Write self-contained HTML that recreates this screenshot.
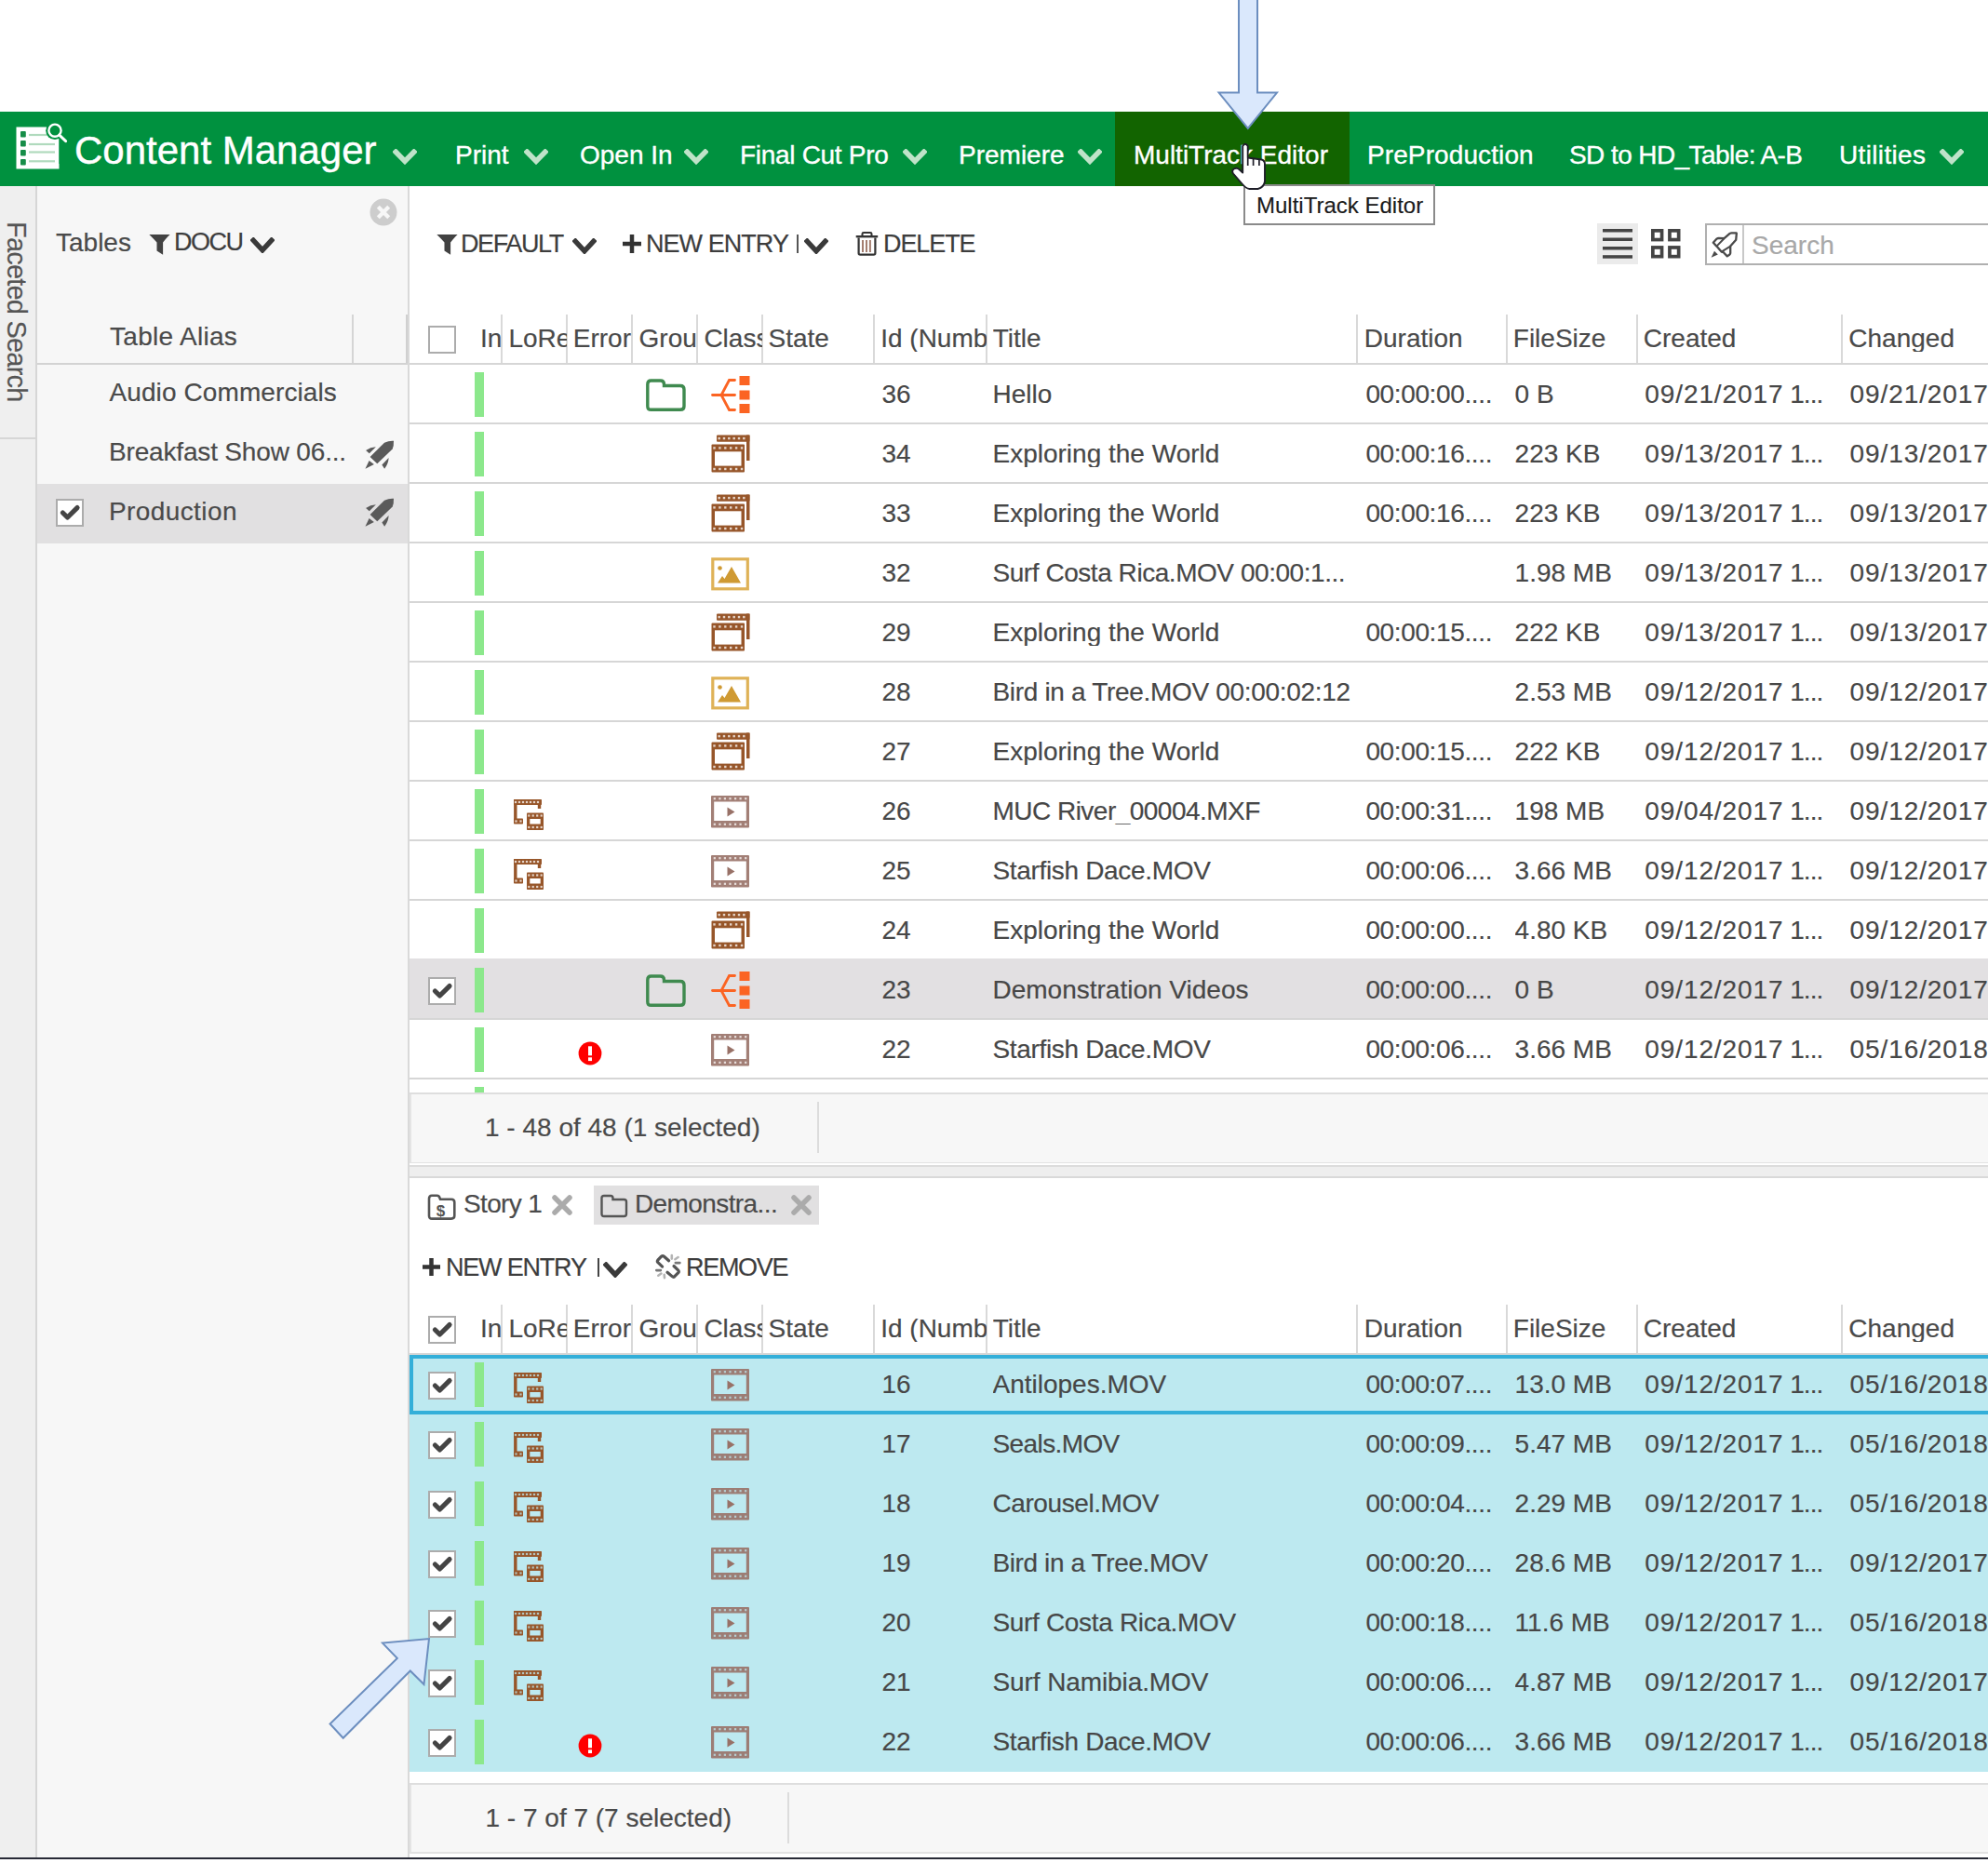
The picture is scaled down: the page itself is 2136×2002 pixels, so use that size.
<!DOCTYPE html><html><head><meta charset="utf-8"><title>Content Manager</title><style>
html,body{margin:0;padding:0;background:#fff;}
body{width:2136px;height:2002px;position:relative;overflow:hidden;font-family:"Liberation Sans",sans-serif;color:#333;}
.t{position:absolute;white-space:nowrap;-webkit-text-stroke:0.18px currentColor;}
.r{position:absolute;display:block;}
</style></head><body>
<div class="r" style="left:0px;top:120px;width:2136px;height:80px;background:#00913f;"></div>
<div class="r" style="left:1198px;top:120px;width:252px;height:80px;background:#126400;"></div>
<svg class="r" style="left:17px;top:132px;" width="57" height="50" viewBox="0 0 57 50">
<rect x="0.5" y="4.5" width="46" height="45" fill="#fff"/>
<g stroke="#b0dabd" stroke-width="2.2"><line x1="14" y1="13" x2="43" y2="13"/><line x1="14" y1="23" x2="42" y2="23"/><line x1="14" y1="31.5" x2="42" y2="31.5"/><line x1="14" y1="41.3" x2="42" y2="41.3"/></g>
<g fill="#168d48"><rect x="5" y="9" width="5.8" height="6.5" rx="1"/><rect x="5" y="19" width="5.8" height="6.5" rx="1"/><rect x="5" y="29" width="5.8" height="6.5" rx="1"/><rect x="5" y="39" width="5.8" height="6.5" rx="1"/></g>
<circle cx="42" cy="8.2" r="9.8" fill="#00913f"/>
<rect x="46.5" y="4" width="12" height="40" fill="#00913f"/>
<circle cx="42" cy="8.2" r="6.6" fill="none" stroke="#fff" stroke-width="2.4"/>
<line x1="46.8" y1="13.2" x2="53.6" y2="19.6" stroke="#fff" stroke-width="3" stroke-linecap="round"/>
</svg>
<div class="t" style="left:80.0px;top:141.4px;font-size:42px;line-height:42px;color:#fff;-webkit-text-stroke:0.4px #fff;">Content Manager</div>
<svg class="r" style="left:422px;top:160px;" width="26" height="16.5" viewBox="0 0 26 16.5"><polyline points="3.3,3.3 13.0,13.2 22.7,3.3" fill="none" stroke="#bfe3c9" stroke-width="5.6" stroke-linecap="square"/></svg>
<div class="t" style="left:489.0px;top:152.9px;font-size:28px;line-height:28px;color:#fff;-webkit-text-stroke:0.35px #fff;">Print</div>
<svg class="r" style="left:563px;top:160px;" width="26" height="16.5" viewBox="0 0 26 16.5"><polyline points="3.3,3.3 13.0,13.2 22.7,3.3" fill="none" stroke="#bfe3c9" stroke-width="5.6" stroke-linecap="square"/></svg>
<div class="t" style="left:623.0px;top:152.9px;font-size:28px;line-height:28px;color:#fff;-webkit-text-stroke:0.35px #fff;">Open In</div>
<svg class="r" style="left:735px;top:160px;" width="26" height="16.5" viewBox="0 0 26 16.5"><polyline points="3.3,3.3 13.0,13.2 22.7,3.3" fill="none" stroke="#bfe3c9" stroke-width="5.6" stroke-linecap="square"/></svg>
<div class="t" style="left:795.0px;top:152.9px;font-size:28px;line-height:28px;color:#fff;letter-spacing:-0.3px;-webkit-text-stroke:0.35px #fff;">Final Cut Pro</div>
<svg class="r" style="left:970px;top:160px;" width="26" height="16.5" viewBox="0 0 26 16.5"><polyline points="3.3,3.3 13.0,13.2 22.7,3.3" fill="none" stroke="#bfe3c9" stroke-width="5.6" stroke-linecap="square"/></svg>
<div class="t" style="left:1030.0px;top:152.9px;font-size:28px;line-height:28px;color:#fff;-webkit-text-stroke:0.35px #fff;">Premiere</div>
<svg class="r" style="left:1158px;top:160px;" width="26" height="16.5" viewBox="0 0 26 16.5"><polyline points="3.3,3.3 13.0,13.2 22.7,3.3" fill="none" stroke="#bfe3c9" stroke-width="5.6" stroke-linecap="square"/></svg>
<div class="t" style="left:1218.0px;top:152.9px;font-size:28px;line-height:28px;color:#fff;-webkit-text-stroke:0.35px #fff;">MultiTrack Editor</div>
<div class="t" style="left:1469.0px;top:152.9px;font-size:28px;line-height:28px;color:#fff;letter-spacing:0.1px;-webkit-text-stroke:0.35px #fff;">PreProduction</div>
<div class="t" style="left:1686.0px;top:152.9px;font-size:28px;line-height:28px;color:#fff;letter-spacing:-0.58px;-webkit-text-stroke:0.35px #fff;">SD to HD_Table: A-B</div>
<div class="t" style="left:1976.0px;top:152.9px;font-size:28px;line-height:28px;color:#fff;letter-spacing:0.35px;-webkit-text-stroke:0.35px #fff;">Utilities</div>
<svg class="r" style="left:2084px;top:160px;" width="26" height="16.5" viewBox="0 0 26 16.5"><polyline points="3.3,3.3 13.0,13.2 22.7,3.3" fill="none" stroke="#bfe3c9" stroke-width="5.6" stroke-linecap="square"/></svg>
<div class="r" style="left:0px;top:200px;width:38px;height:1796px;background:#efefef;"></div>
<div class="r" style="left:38px;top:200px;width:2px;height:1796px;background:#d6d6d6;"></div>
<div class="r" style="left:0px;top:470px;width:38px;height:2px;background:#d6d6d6;"></div>
<div class="t" style="left:3px;top:237.5px;font-size:29px;line-height:29px;color:#555;writing-mode:vertical-rl;letter-spacing:-0.8px;">Faceted Search</div>
<div class="r" style="left:40px;top:200px;width:398px;height:1796px;background:#f7f7f7;"></div>
<div class="r" style="left:438px;top:200px;width:2px;height:1796px;background:#d9d9d9;"></div>
<svg class="r" style="left:397px;top:213px;" width="30" height="30" viewBox="0 0 30 30"><circle cx="15" cy="15" r="14.5" fill="#cdcdcd"/><path d="M10.8 10.8 L19.2 19.2 M19.2 10.8 L10.8 19.2" stroke="#f7f7f7" stroke-width="4.2" stroke-linecap="square"/></svg>
<div class="r" style="left:436px;top:338px;width:2px;height:52px;background:#d0d0d0;"></div>
<div class="t" style="left:60.0px;top:246.8px;font-size:28px;line-height:28px;color:#4a4a4a;">Tables</div>
<svg class="r" style="left:160px;top:252px;" width="23" height="22" viewBox="0 0 23 22"><path d="M0.3 0 H22.6 Q18 4.5 15.1 8.6 V21.7 L8.5 17.6 V8.6 Q5 4.5 0.3 0 Z" fill="#424242"/></svg>
<div class="t" style="left:187.0px;top:247.1px;font-size:27px;line-height:27px;color:#3d3d3d;letter-spacing:-1.5px;">DOCU</div>
<svg class="r" style="left:269px;top:255px;" width="26" height="17" viewBox="0 0 26 17"><polyline points="3.25,3.25 13.0,13.75 22.75,3.25" fill="none" stroke="#3a3a3a" stroke-width="5.5" stroke-linecap="square"/></svg>
<div class="r" style="left:378px;top:338px;width:2px;height:52px;background:#d5d5d5;"></div>
<div class="t" style="left:118.0px;top:347.8px;font-size:28px;line-height:28px;color:#4a4a4a;letter-spacing:0.3px;">Table Alias</div>
<div class="r" style="left:40px;top:390px;width:398px;height:2px;background:#d3d3d3;"></div>
<div class="t" style="left:117.5px;top:407.8px;font-size:28px;line-height:28px;color:#4a4a4a;letter-spacing:0.1px;">Audio Commercials</div>
<div class="t" style="left:117.0px;top:471.9px;font-size:28px;line-height:28px;color:#4a4a4a;letter-spacing:-0.17px;">Breakfast Show 06...</div>
<div class="r" style="left:40px;top:520px;width:398px;height:64px;background:#e1e0e1;"></div>
<div class="t" style="left:117.0px;top:535.7px;font-size:28px;line-height:28px;color:#4a4a4a;letter-spacing:0.4px;">Production</div>
<svg class="r" style="left:392px;top:473px;" width="32" height="32" viewBox="0 0 32 32"><g fill="#5a5a5a"><path d="M5.6 18 L21 2.8 Q26 0.4 31 0.8 Q31.2 6 29.7 9.5 L13.3 25.2 Z"/><path d="M1.1 10.9 Q6 7.5 11.9 7.2 L4.8 14.3 Z"/><path d="M18.4 26.6 L25.6 19 Q25.5 25 21.1 30.7 Z"/><path d="M0.5 30.7 L4.6 22.1 L9.9 26 Z"/></g></svg>
<svg class="r" style="left:392px;top:535px;" width="32" height="32" viewBox="0 0 32 32"><g fill="#5a5a5a"><path d="M5.6 18 L21 2.8 Q26 0.4 31 0.8 Q31.2 6 29.7 9.5 L13.3 25.2 Z"/><path d="M1.1 10.9 Q6 7.5 11.9 7.2 L4.8 14.3 Z"/><path d="M18.4 26.6 L25.6 19 Q25.5 25 21.1 30.7 Z"/><path d="M0.5 30.7 L4.6 22.1 L9.9 26 Z"/></g></svg>
<svg class="r" style="left:60px;top:536px;" width="30" height="30" viewBox="0 0 30 30"><rect x="1" y="1" width="28" height="28" fill="#fff" stroke="#acacac" stroke-width="2"/><path d="M7.4 15 L12.5 20 L23 9.6" fill="none" stroke="#444" stroke-width="5.2" stroke-linecap="round" stroke-linejoin="round"/></svg>
<div class="r" style="left:440px;top:200px;width:1696px;height:138px;background:#fff;"></div>
<svg class="r" style="left:469px;top:252px;" width="23" height="22" viewBox="0 0 23 22"><path d="M0.3 0 H22.6 Q18 4.5 15.1 8.6 V21.7 L8.5 17.6 V8.6 Q5 4.5 0.3 0 Z" fill="#424242"/></svg>
<div class="t" style="left:495.0px;top:248.9px;font-size:27px;line-height:27px;color:#3d3d3d;letter-spacing:-1.4px;">DEFAULT</div>
<svg class="r" style="left:615px;top:256px;" width="26" height="17" viewBox="0 0 26 17"><polyline points="3.25,3.25 13.0,13.75 22.75,3.25" fill="none" stroke="#3a3a3a" stroke-width="5.5" stroke-linecap="square"/></svg>
<svg class="r" style="left:669px;top:252px;" width="20" height="20" viewBox="0 0 20 20"><path d="M10.0 0 V20 M0 10.0 H20" stroke="#333" stroke-width="4.5"/></svg>
<div class="t" style="left:694.0px;top:248.9px;font-size:27px;line-height:27px;color:#3d3d3d;letter-spacing:-0.95px;">NEW ENTRY</div>
<div class="r" style="left:856px;top:252px;width:2px;height:20px;background:#555;"></div>
<svg class="r" style="left:864px;top:256px;" width="26" height="17" viewBox="0 0 26 17"><polyline points="3.25,3.25 13.0,13.75 22.75,3.25" fill="none" stroke="#3a3a3a" stroke-width="5.5" stroke-linecap="square"/></svg>
<svg class="r" style="left:919px;top:249px;" width="25" height="26" viewBox="0 0 25 26"><g fill="none" stroke="#333"><path d="M0.7 5.2 H24.2" stroke-width="2.4"/><path d="M7.5 4.5 V2.2 Q7.5 1 9 1 H16 Q17.5 1 17.5 2.2 V4.5" stroke-width="2"/><path d="M3.6 6.5 V23 Q3.6 24.6 5.3 24.6 H19.7 Q21.4 24.6 21.4 23 V6.5" stroke-width="2.2"/><path d="M8 9 V22 M12 9 V22 M15.9 9 V22" stroke-width="2" stroke="#9a7060" opacity="0.9"/></g></svg>
<div class="t" style="left:949.0px;top:248.9px;font-size:27px;line-height:27px;color:#3d3d3d;letter-spacing:-1.1px;">DELETE</div>
<div class="r" style="left:1716px;top:240px;width:44px;height:44px;background:#ebebeb;"></div>
<svg class="r" style="left:1722px;top:246px;" width="32" height="32" viewBox="0 0 32 32"><g fill="#444"><rect x="0" y="0" width="32" height="3.5"/><rect x="0" y="9.5" width="32" height="3.5"/><rect x="0" y="19" width="32" height="3.5"/><rect x="0" y="28.2" width="32" height="3.5"/></g></svg>
<svg class="r" style="left:1774px;top:246px;" width="33" height="33" viewBox="0 0 33 33"><g fill="none" stroke="#444" stroke-width="3.7"><rect x="1.85" y="1.85" width="9.7" height="9.7"/><rect x="19.95" y="1.85" width="9.7" height="9.7"/><rect x="1.85" y="19.95" width="9.7" height="9.7"/><rect x="19.95" y="19.95" width="9.7" height="9.7"/></g></svg>
<div class="r" style="left:1832px;top:240px;width:320px;height:41px;border:2px solid #b0b0b0;background:#fff;"></div>
<div class="r" style="left:1872px;top:242px;width:2px;height:41px;background:#c8c8c8;"></div>
<svg class="r" style="left:1832px;top:242px;" width="40" height="40" viewBox="0 0 40 40"><path d="M8.8 18.8 L12.6 14.6 Q13.4 14 14.5 14 L20.5 14.2 L26.6 8.9 Q27.5 8.3 28.6 8.3 L33.4 8.4 Q34 8.6 33.8 9.4 L33.2 15.8 L27.2 22.6 L27.2 30 Q27 31 26.2 31.8 L23.8 33.4 L19.8 29.2 L17.6 28.6 L12.4 22.6 Z" fill="none" stroke="#4a4a4a" stroke-width="2.3" stroke-linejoin="round"/><path d="M12.4 22.6 L20.5 14.2 M17.6 28.6 L27.2 22.6" fill="none" stroke="#4a4a4a" stroke-width="2"/><path d="M6.6 34.8 L10 27.8 L13.8 31.6 Z" fill="#4a4a4a"/></svg>
<div class="t" style="left:1882.0px;top:249.5px;font-size:28px;line-height:28px;color:#a8a8a8;">Search</div>
<div class="r" style="left:440px;top:338px;width:1696px;height:836px;background:#fff;"></div>
<div class="r" style="left:538px;top:338px;width:2px;height:52px;background:#d9d9d9;"></div>
<div class="r" style="left:608px;top:338px;width:2px;height:52px;background:#d9d9d9;"></div>
<div class="r" style="left:678px;top:338px;width:2px;height:52px;background:#d9d9d9;"></div>
<div class="r" style="left:748px;top:338px;width:2px;height:52px;background:#d9d9d9;"></div>
<div class="r" style="left:818px;top:338px;width:2px;height:52px;background:#d9d9d9;"></div>
<div class="r" style="left:938px;top:338px;width:2px;height:52px;background:#d9d9d9;"></div>
<div class="r" style="left:1059px;top:338px;width:2px;height:52px;background:#d9d9d9;"></div>
<div class="r" style="left:1457px;top:338px;width:2px;height:52px;background:#d9d9d9;"></div>
<div class="r" style="left:1618px;top:338px;width:2px;height:52px;background:#d9d9d9;"></div>
<div class="r" style="left:1758px;top:338px;width:2px;height:52px;background:#d9d9d9;"></div>
<div class="r" style="left:1978px;top:338px;width:2px;height:52px;background:#d9d9d9;"></div>
<div class="r" style="left:440px;top:390px;width:1696px;height:2px;background:#d6d6d6;"></div>
<svg class="r" style="left:460px;top:350px;" width="30" height="30" viewBox="0 0 30 30"><rect x="1" y="1" width="28" height="28" fill="#fff" stroke="#acacac" stroke-width="2"/></svg>
<div class="t" style="left:516.1px;top:350.3px;width:22.7px;overflow:hidden;font-size:28px;line-height:28px;color:#4a4a4a;">In</div>
<div class="t" style="left:546.4px;top:350.3px;width:62.4px;overflow:hidden;font-size:28px;line-height:28px;color:#4a4a4a;">LoRe</div>
<div class="t" style="left:615.8px;top:350.3px;width:63.0px;overflow:hidden;font-size:28px;line-height:28px;color:#4a4a4a;">Error</div>
<div class="t" style="left:686.6px;top:350.3px;width:62.2px;overflow:hidden;font-size:28px;line-height:28px;color:#4a4a4a;">Grou</div>
<div class="t" style="left:756.4px;top:350.3px;width:62.4px;overflow:hidden;font-size:28px;line-height:28px;color:#4a4a4a;">Class</div>
<div class="t" style="left:825.5px;top:350.3px;width:113.3px;overflow:hidden;font-size:28px;line-height:28px;color:#4a4a4a;">State</div>
<div class="t" style="left:946.2px;top:350.3px;width:113.6px;overflow:hidden;font-size:28px;line-height:28px;color:#4a4a4a;">Id (Number)</div>
<div class="t" style="left:1066.8px;top:350.3px;width:391.0px;overflow:hidden;font-size:28px;line-height:28px;color:#4a4a4a;">Title</div>
<div class="t" style="left:1465.8px;top:350.3px;width:153.0px;overflow:hidden;font-size:28px;line-height:28px;color:#4a4a4a;">Duration</div>
<div class="t" style="left:1625.8px;top:350.3px;width:133.0px;overflow:hidden;font-size:28px;line-height:28px;color:#4a4a4a;">FileSize</div>
<div class="t" style="left:1765.8px;top:350.3px;width:213.0px;overflow:hidden;font-size:28px;line-height:28px;color:#4a4a4a;">Created</div>
<div class="t" style="left:1986.3px;top:350.3px;width:150.5px;overflow:hidden;font-size:28px;line-height:28px;color:#4a4a4a;">Changed</div>
<div class="r" style="left:440px;top:454px;width:1696px;height:2px;background:#d6d6d6;"></div>
<div class="r" style="left:510px;top:400px;width:10px;height:48px;background:#8ce88c;"></div>
<svg class="r" style="left:694px;top:407px;" width="43" height="35" viewBox="0 0 43 35"><path d="M5.5 2 H15.5 Q19.5 2 19.5 6 V7.5 H37 Q41 7.5 41 11.5 V29.5 Q41 33.3 37 33.3 H5.5 Q1.8 33.3 1.8 29.5 V6 Q1.8 2 5.5 2 Z" fill="none" stroke="#3f8a4f" stroke-width="3.4"/></svg>
<svg class="r" style="left:764px;top:404px;" width="42" height="41" viewBox="0 0 42 41"><g fill="none" stroke="#fb6423" stroke-width="2.8" stroke-linecap="round"><path d="M1.5 20.5 H25.5"/><path d="M25.5 4.5 H19.5 L11 20.5 L19.5 36.5 H25.5"/></g><g fill="#fb6423"><rect x="30.5" y="0" width="11" height="10"/><rect x="30.5" y="15.5" width="11" height="10"/><rect x="30.5" y="30" width="11" height="10"/></g></svg>
<div class="t" style="left:947.5px;top:410.3px;width:111.5px;overflow:hidden;font-size:28px;line-height:28px;color:#474747;">36</div>
<div class="t" style="left:1066.5px;top:410.3px;width:390.5px;overflow:hidden;font-size:28px;line-height:28px;color:#474747;">Hello</div>
<div class="t" style="left:1467.4px;top:410.3px;width:150.6px;overflow:hidden;font-size:28px;line-height:28px;color:#474747;letter-spacing:-0.37px;">00:00:00....</div>
<div class="t" style="left:1627.6px;top:410.3px;width:130.4px;overflow:hidden;font-size:28px;line-height:28px;color:#474747;">0 B</div>
<div class="t" style="left:1767.3px;top:410.3px;width:210.7px;overflow:hidden;font-size:28px;line-height:28px;color:#474747;"><span style="letter-spacing:0.9px">09/21/2017</span><span style="letter-spacing:-1px"> 1</span><span style="letter-spacing:-0.9px">...</span></div>
<div class="t" style="left:1987.6px;top:410.3px;width:148.4px;overflow:hidden;font-size:28px;line-height:28px;color:#474747;"><span style="letter-spacing:0.9px">09/21/2017</span><span style="letter-spacing:-1px"> 1</span><span style="letter-spacing:-0.9px">...</span></div>
<div class="r" style="left:440px;top:518px;width:1696px;height:2px;background:#d6d6d6;"></div>
<div class="r" style="left:510px;top:464px;width:10px;height:48px;background:#8ce88c;"></div>
<svg class="r" style="left:764px;top:467px;" width="42" height="41" viewBox="0 0 42 41"><g fill="#97562a"><rect x="6" y="0.5" width="35.5" height="7.2" rx="1"/><rect x="38" y="0.5" width="3.5" height="27.5"/><rect x="0.5" y="10.5" width="35.5" height="30" rx="1"/></g><rect x="4" y="18.3" width="28.5" height="15.3" fill="#fff"/><rect x="7.5" y="2.9" width="2.4" height="2.4" fill="#fff" opacity="0.75"/><rect x="12.8" y="2.9" width="2.4" height="2.4" fill="#fff" opacity="0.75"/><rect x="18.1" y="2.9" width="2.4" height="2.4" fill="#fff" opacity="0.75"/><rect x="23.5" y="2.9" width="2.4" height="2.4" fill="#fff" opacity="0.75"/><rect x="28.8" y="2.9" width="2.4" height="2.4" fill="#fff" opacity="0.75"/><rect x="34.1" y="2.9" width="2.4" height="2.4" fill="#fff" opacity="0.75"/><rect x="2.3" y="13.2" width="2.4" height="2.4" fill="#fff" opacity="0.75"/><rect x="8.2" y="13.2" width="2.4" height="2.4" fill="#fff" opacity="0.75"/><rect x="14.1" y="13.2" width="2.4" height="2.4" fill="#fff" opacity="0.75"/><rect x="20.0" y="13.2" width="2.4" height="2.4" fill="#fff" opacity="0.75"/><rect x="25.9" y="13.2" width="2.4" height="2.4" fill="#fff" opacity="0.75"/><rect x="31.8" y="13.2" width="2.4" height="2.4" fill="#fff" opacity="0.75"/><rect x="2.3" y="35.8" width="2.4" height="2.4" fill="#fff" opacity="0.75"/><rect x="8.2" y="35.8" width="2.4" height="2.4" fill="#fff" opacity="0.75"/><rect x="14.1" y="35.8" width="2.4" height="2.4" fill="#fff" opacity="0.75"/><rect x="20.0" y="35.8" width="2.4" height="2.4" fill="#fff" opacity="0.75"/><rect x="25.9" y="35.8" width="2.4" height="2.4" fill="#fff" opacity="0.75"/><rect x="31.8" y="35.8" width="2.4" height="2.4" fill="#fff" opacity="0.75"/></svg>
<div class="t" style="left:947.5px;top:474.3px;width:111.5px;overflow:hidden;font-size:28px;line-height:28px;color:#474747;">34</div>
<div class="t" style="left:1066.5px;top:474.3px;width:390.5px;overflow:hidden;font-size:28px;line-height:28px;color:#474747;">Exploring the World</div>
<div class="t" style="left:1467.4px;top:474.3px;width:150.6px;overflow:hidden;font-size:28px;line-height:28px;color:#474747;letter-spacing:-0.37px;">00:00:16....</div>
<div class="t" style="left:1627.6px;top:474.3px;width:130.4px;overflow:hidden;font-size:28px;line-height:28px;color:#474747;">223 KB</div>
<div class="t" style="left:1767.3px;top:474.3px;width:210.7px;overflow:hidden;font-size:28px;line-height:28px;color:#474747;"><span style="letter-spacing:0.9px">09/13/2017</span><span style="letter-spacing:-1px"> 1</span><span style="letter-spacing:-0.9px">...</span></div>
<div class="t" style="left:1987.6px;top:474.3px;width:148.4px;overflow:hidden;font-size:28px;line-height:28px;color:#474747;"><span style="letter-spacing:0.9px">09/13/2017</span><span style="letter-spacing:-1px"> 1</span><span style="letter-spacing:-0.9px">...</span></div>
<div class="r" style="left:440px;top:582px;width:1696px;height:2px;background:#d6d6d6;"></div>
<div class="r" style="left:510px;top:528px;width:10px;height:48px;background:#8ce88c;"></div>
<svg class="r" style="left:764px;top:531px;" width="42" height="41" viewBox="0 0 42 41"><g fill="#97562a"><rect x="6" y="0.5" width="35.5" height="7.2" rx="1"/><rect x="38" y="0.5" width="3.5" height="27.5"/><rect x="0.5" y="10.5" width="35.5" height="30" rx="1"/></g><rect x="4" y="18.3" width="28.5" height="15.3" fill="#fff"/><rect x="7.5" y="2.9" width="2.4" height="2.4" fill="#fff" opacity="0.75"/><rect x="12.8" y="2.9" width="2.4" height="2.4" fill="#fff" opacity="0.75"/><rect x="18.1" y="2.9" width="2.4" height="2.4" fill="#fff" opacity="0.75"/><rect x="23.5" y="2.9" width="2.4" height="2.4" fill="#fff" opacity="0.75"/><rect x="28.8" y="2.9" width="2.4" height="2.4" fill="#fff" opacity="0.75"/><rect x="34.1" y="2.9" width="2.4" height="2.4" fill="#fff" opacity="0.75"/><rect x="2.3" y="13.2" width="2.4" height="2.4" fill="#fff" opacity="0.75"/><rect x="8.2" y="13.2" width="2.4" height="2.4" fill="#fff" opacity="0.75"/><rect x="14.1" y="13.2" width="2.4" height="2.4" fill="#fff" opacity="0.75"/><rect x="20.0" y="13.2" width="2.4" height="2.4" fill="#fff" opacity="0.75"/><rect x="25.9" y="13.2" width="2.4" height="2.4" fill="#fff" opacity="0.75"/><rect x="31.8" y="13.2" width="2.4" height="2.4" fill="#fff" opacity="0.75"/><rect x="2.3" y="35.8" width="2.4" height="2.4" fill="#fff" opacity="0.75"/><rect x="8.2" y="35.8" width="2.4" height="2.4" fill="#fff" opacity="0.75"/><rect x="14.1" y="35.8" width="2.4" height="2.4" fill="#fff" opacity="0.75"/><rect x="20.0" y="35.8" width="2.4" height="2.4" fill="#fff" opacity="0.75"/><rect x="25.9" y="35.8" width="2.4" height="2.4" fill="#fff" opacity="0.75"/><rect x="31.8" y="35.8" width="2.4" height="2.4" fill="#fff" opacity="0.75"/></svg>
<div class="t" style="left:947.5px;top:538.3px;width:111.5px;overflow:hidden;font-size:28px;line-height:28px;color:#474747;">33</div>
<div class="t" style="left:1066.5px;top:538.3px;width:390.5px;overflow:hidden;font-size:28px;line-height:28px;color:#474747;">Exploring the World</div>
<div class="t" style="left:1467.4px;top:538.3px;width:150.6px;overflow:hidden;font-size:28px;line-height:28px;color:#474747;letter-spacing:-0.37px;">00:00:16....</div>
<div class="t" style="left:1627.6px;top:538.3px;width:130.4px;overflow:hidden;font-size:28px;line-height:28px;color:#474747;">223 KB</div>
<div class="t" style="left:1767.3px;top:538.3px;width:210.7px;overflow:hidden;font-size:28px;line-height:28px;color:#474747;"><span style="letter-spacing:0.9px">09/13/2017</span><span style="letter-spacing:-1px"> 1</span><span style="letter-spacing:-0.9px">...</span></div>
<div class="t" style="left:1987.6px;top:538.3px;width:148.4px;overflow:hidden;font-size:28px;line-height:28px;color:#474747;"><span style="letter-spacing:0.9px">09/13/2017</span><span style="letter-spacing:-1px"> 1</span><span style="letter-spacing:-0.9px">...</span></div>
<div class="r" style="left:440px;top:646px;width:1696px;height:2px;background:#d6d6d6;"></div>
<div class="r" style="left:510px;top:592px;width:10px;height:48px;background:#8ce88c;"></div>
<svg class="r" style="left:764px;top:599px;" width="42" height="36" viewBox="0 0 42 36"><rect x="1.8" y="1.8" width="37.5" height="32" fill="none" stroke="#d9a43a" stroke-width="3.2" opacity="0.85"/><path d="M7 27.5 L12 20 L14.5 23 L22 10 L32 27.5 Z" fill="#cf9a33"/><circle cx="9.5" cy="11.5" r="2.3" fill="#cf9a33"/></svg>
<div class="t" style="left:947.5px;top:602.3px;width:111.5px;overflow:hidden;font-size:28px;line-height:28px;color:#474747;">32</div>
<div class="t" style="left:1066.5px;top:602.3px;width:390.5px;overflow:hidden;font-size:28px;line-height:28px;color:#474747;letter-spacing:-0.45px;">Surf Costa Rica.MOV 00:00:1...</div>
<div class="t" style="left:1627.6px;top:602.3px;width:130.4px;overflow:hidden;font-size:28px;line-height:28px;color:#474747;">1.98 MB</div>
<div class="t" style="left:1767.3px;top:602.3px;width:210.7px;overflow:hidden;font-size:28px;line-height:28px;color:#474747;"><span style="letter-spacing:0.9px">09/13/2017</span><span style="letter-spacing:-1px"> 1</span><span style="letter-spacing:-0.9px">...</span></div>
<div class="t" style="left:1987.6px;top:602.3px;width:148.4px;overflow:hidden;font-size:28px;line-height:28px;color:#474747;"><span style="letter-spacing:0.9px">09/13/2017</span><span style="letter-spacing:-1px"> 1</span><span style="letter-spacing:-0.9px">...</span></div>
<div class="r" style="left:440px;top:710px;width:1696px;height:2px;background:#d6d6d6;"></div>
<div class="r" style="left:510px;top:656px;width:10px;height:48px;background:#8ce88c;"></div>
<svg class="r" style="left:764px;top:659px;" width="42" height="41" viewBox="0 0 42 41"><g fill="#97562a"><rect x="6" y="0.5" width="35.5" height="7.2" rx="1"/><rect x="38" y="0.5" width="3.5" height="27.5"/><rect x="0.5" y="10.5" width="35.5" height="30" rx="1"/></g><rect x="4" y="18.3" width="28.5" height="15.3" fill="#fff"/><rect x="7.5" y="2.9" width="2.4" height="2.4" fill="#fff" opacity="0.75"/><rect x="12.8" y="2.9" width="2.4" height="2.4" fill="#fff" opacity="0.75"/><rect x="18.1" y="2.9" width="2.4" height="2.4" fill="#fff" opacity="0.75"/><rect x="23.5" y="2.9" width="2.4" height="2.4" fill="#fff" opacity="0.75"/><rect x="28.8" y="2.9" width="2.4" height="2.4" fill="#fff" opacity="0.75"/><rect x="34.1" y="2.9" width="2.4" height="2.4" fill="#fff" opacity="0.75"/><rect x="2.3" y="13.2" width="2.4" height="2.4" fill="#fff" opacity="0.75"/><rect x="8.2" y="13.2" width="2.4" height="2.4" fill="#fff" opacity="0.75"/><rect x="14.1" y="13.2" width="2.4" height="2.4" fill="#fff" opacity="0.75"/><rect x="20.0" y="13.2" width="2.4" height="2.4" fill="#fff" opacity="0.75"/><rect x="25.9" y="13.2" width="2.4" height="2.4" fill="#fff" opacity="0.75"/><rect x="31.8" y="13.2" width="2.4" height="2.4" fill="#fff" opacity="0.75"/><rect x="2.3" y="35.8" width="2.4" height="2.4" fill="#fff" opacity="0.75"/><rect x="8.2" y="35.8" width="2.4" height="2.4" fill="#fff" opacity="0.75"/><rect x="14.1" y="35.8" width="2.4" height="2.4" fill="#fff" opacity="0.75"/><rect x="20.0" y="35.8" width="2.4" height="2.4" fill="#fff" opacity="0.75"/><rect x="25.9" y="35.8" width="2.4" height="2.4" fill="#fff" opacity="0.75"/><rect x="31.8" y="35.8" width="2.4" height="2.4" fill="#fff" opacity="0.75"/></svg>
<div class="t" style="left:947.5px;top:666.3px;width:111.5px;overflow:hidden;font-size:28px;line-height:28px;color:#474747;">29</div>
<div class="t" style="left:1066.5px;top:666.3px;width:390.5px;overflow:hidden;font-size:28px;line-height:28px;color:#474747;">Exploring the World</div>
<div class="t" style="left:1467.4px;top:666.3px;width:150.6px;overflow:hidden;font-size:28px;line-height:28px;color:#474747;letter-spacing:-0.37px;">00:00:15....</div>
<div class="t" style="left:1627.6px;top:666.3px;width:130.4px;overflow:hidden;font-size:28px;line-height:28px;color:#474747;">222 KB</div>
<div class="t" style="left:1767.3px;top:666.3px;width:210.7px;overflow:hidden;font-size:28px;line-height:28px;color:#474747;"><span style="letter-spacing:0.9px">09/13/2017</span><span style="letter-spacing:-1px"> 1</span><span style="letter-spacing:-0.9px">...</span></div>
<div class="t" style="left:1987.6px;top:666.3px;width:148.4px;overflow:hidden;font-size:28px;line-height:28px;color:#474747;"><span style="letter-spacing:0.9px">09/13/2017</span><span style="letter-spacing:-1px"> 1</span><span style="letter-spacing:-0.9px">...</span></div>
<div class="r" style="left:440px;top:774px;width:1696px;height:2px;background:#d6d6d6;"></div>
<div class="r" style="left:510px;top:720px;width:10px;height:48px;background:#8ce88c;"></div>
<svg class="r" style="left:764px;top:727px;" width="42" height="36" viewBox="0 0 42 36"><rect x="1.8" y="1.8" width="37.5" height="32" fill="none" stroke="#d9a43a" stroke-width="3.2" opacity="0.85"/><path d="M7 27.5 L12 20 L14.5 23 L22 10 L32 27.5 Z" fill="#cf9a33"/><circle cx="9.5" cy="11.5" r="2.3" fill="#cf9a33"/></svg>
<div class="t" style="left:947.5px;top:730.3px;width:111.5px;overflow:hidden;font-size:28px;line-height:28px;color:#474747;">28</div>
<div class="t" style="left:1066.5px;top:730.3px;width:390.5px;overflow:hidden;font-size:28px;line-height:28px;color:#474747;letter-spacing:-0.32px;">Bird in a Tree.MOV 00:00:02:12</div>
<div class="t" style="left:1627.6px;top:730.3px;width:130.4px;overflow:hidden;font-size:28px;line-height:28px;color:#474747;">2.53 MB</div>
<div class="t" style="left:1767.3px;top:730.3px;width:210.7px;overflow:hidden;font-size:28px;line-height:28px;color:#474747;"><span style="letter-spacing:0.9px">09/12/2017</span><span style="letter-spacing:-1px"> 1</span><span style="letter-spacing:-0.9px">...</span></div>
<div class="t" style="left:1987.6px;top:730.3px;width:148.4px;overflow:hidden;font-size:28px;line-height:28px;color:#474747;"><span style="letter-spacing:0.9px">09/12/2017</span><span style="letter-spacing:-1px"> 1</span><span style="letter-spacing:-0.9px">...</span></div>
<div class="r" style="left:440px;top:838px;width:1696px;height:2px;background:#d6d6d6;"></div>
<div class="r" style="left:510px;top:784px;width:10px;height:48px;background:#8ce88c;"></div>
<svg class="r" style="left:764px;top:787px;" width="42" height="41" viewBox="0 0 42 41"><g fill="#97562a"><rect x="6" y="0.5" width="35.5" height="7.2" rx="1"/><rect x="38" y="0.5" width="3.5" height="27.5"/><rect x="0.5" y="10.5" width="35.5" height="30" rx="1"/></g><rect x="4" y="18.3" width="28.5" height="15.3" fill="#fff"/><rect x="7.5" y="2.9" width="2.4" height="2.4" fill="#fff" opacity="0.75"/><rect x="12.8" y="2.9" width="2.4" height="2.4" fill="#fff" opacity="0.75"/><rect x="18.1" y="2.9" width="2.4" height="2.4" fill="#fff" opacity="0.75"/><rect x="23.5" y="2.9" width="2.4" height="2.4" fill="#fff" opacity="0.75"/><rect x="28.8" y="2.9" width="2.4" height="2.4" fill="#fff" opacity="0.75"/><rect x="34.1" y="2.9" width="2.4" height="2.4" fill="#fff" opacity="0.75"/><rect x="2.3" y="13.2" width="2.4" height="2.4" fill="#fff" opacity="0.75"/><rect x="8.2" y="13.2" width="2.4" height="2.4" fill="#fff" opacity="0.75"/><rect x="14.1" y="13.2" width="2.4" height="2.4" fill="#fff" opacity="0.75"/><rect x="20.0" y="13.2" width="2.4" height="2.4" fill="#fff" opacity="0.75"/><rect x="25.9" y="13.2" width="2.4" height="2.4" fill="#fff" opacity="0.75"/><rect x="31.8" y="13.2" width="2.4" height="2.4" fill="#fff" opacity="0.75"/><rect x="2.3" y="35.8" width="2.4" height="2.4" fill="#fff" opacity="0.75"/><rect x="8.2" y="35.8" width="2.4" height="2.4" fill="#fff" opacity="0.75"/><rect x="14.1" y="35.8" width="2.4" height="2.4" fill="#fff" opacity="0.75"/><rect x="20.0" y="35.8" width="2.4" height="2.4" fill="#fff" opacity="0.75"/><rect x="25.9" y="35.8" width="2.4" height="2.4" fill="#fff" opacity="0.75"/><rect x="31.8" y="35.8" width="2.4" height="2.4" fill="#fff" opacity="0.75"/></svg>
<div class="t" style="left:947.5px;top:794.3px;width:111.5px;overflow:hidden;font-size:28px;line-height:28px;color:#474747;">27</div>
<div class="t" style="left:1066.5px;top:794.3px;width:390.5px;overflow:hidden;font-size:28px;line-height:28px;color:#474747;">Exploring the World</div>
<div class="t" style="left:1467.4px;top:794.3px;width:150.6px;overflow:hidden;font-size:28px;line-height:28px;color:#474747;letter-spacing:-0.37px;">00:00:15....</div>
<div class="t" style="left:1627.6px;top:794.3px;width:130.4px;overflow:hidden;font-size:28px;line-height:28px;color:#474747;">222 KB</div>
<div class="t" style="left:1767.3px;top:794.3px;width:210.7px;overflow:hidden;font-size:28px;line-height:28px;color:#474747;"><span style="letter-spacing:0.9px">09/12/2017</span><span style="letter-spacing:-1px"> 1</span><span style="letter-spacing:-0.9px">...</span></div>
<div class="t" style="left:1987.6px;top:794.3px;width:148.4px;overflow:hidden;font-size:28px;line-height:28px;color:#474747;"><span style="letter-spacing:0.9px">09/12/2017</span><span style="letter-spacing:-1px"> 1</span><span style="letter-spacing:-0.9px">...</span></div>
<div class="r" style="left:440px;top:902px;width:1696px;height:2px;background:#d6d6d6;"></div>
<div class="r" style="left:510px;top:848px;width:10px;height:48px;background:#8ce88c;"></div>
<svg class="r" style="left:552px;top:859px;" width="32" height="33" viewBox="0 0 32 33"><g fill="none" stroke="#97562a" stroke-width="3.4"><path d="M27.5 10 V1.8 H1.8 V24 H9.7"/></g><g fill="#97562a"><rect x="0" y="0" width="30" height="6" rx="0.8"/><rect x="0" y="20.5" width="10" height="6" rx="0.8"/><rect x="14" y="14.5" width="18" height="18.5" rx="0.8"/></g><rect x="17.3" y="21" width="11.4" height="5.5" fill="#fff"/><rect x="0.9" y="1.9" width="2.2" height="2.2" fill="#fff" opacity="0.75"/><rect x="4.9" y="1.9" width="2.2" height="2.2" fill="#fff" opacity="0.75"/><rect x="8.9" y="1.9" width="2.2" height="2.2" fill="#fff" opacity="0.75"/><rect x="12.9" y="1.9" width="2.2" height="2.2" fill="#fff" opacity="0.75"/><rect x="16.9" y="1.9" width="2.2" height="2.2" fill="#fff" opacity="0.75"/><rect x="20.9" y="1.9" width="2.2" height="2.2" fill="#fff" opacity="0.75"/><rect x="24.9" y="1.9" width="2.2" height="2.2" fill="#fff" opacity="0.75"/><rect x="1.4" y="22.4" width="2.2" height="2.2" fill="#fff" opacity="0.75"/><rect x="6.4" y="22.4" width="2.2" height="2.2" fill="#fff" opacity="0.75"/><rect x="15.2" y="16.4" width="2.2" height="2.2" fill="#fff" opacity="0.75"/><rect x="19.6" y="16.4" width="2.2" height="2.2" fill="#fff" opacity="0.75"/><rect x="24.1" y="16.4" width="2.2" height="2.2" fill="#fff" opacity="0.75"/><rect x="28.6" y="16.4" width="2.2" height="2.2" fill="#fff" opacity="0.75"/><rect x="15.2" y="28.9" width="2.2" height="2.2" fill="#fff" opacity="0.75"/><rect x="19.6" y="28.9" width="2.2" height="2.2" fill="#fff" opacity="0.75"/><rect x="24.1" y="28.9" width="2.2" height="2.2" fill="#fff" opacity="0.75"/><rect x="28.6" y="28.9" width="2.2" height="2.2" fill="#fff" opacity="0.75"/></svg>
<svg class="r" style="left:764px;top:855px;" width="41" height="35" viewBox="0 0 41 35"><g fill="#987167" opacity="0.9"><rect x="0" y="0" width="41" height="34.5" rx="1"/></g><rect x="3.2" y="6.5" width="34.6" height="20.5" fill="#fff"/><rect x="2.7" y="2.1" width="2.2" height="2.2" fill="#fff" opacity="0.75"/><rect x="8.3" y="2.1" width="2.2" height="2.2" fill="#fff" opacity="0.75"/><rect x="13.8" y="2.1" width="2.2" height="2.2" fill="#fff" opacity="0.75"/><rect x="19.4" y="2.1" width="2.2" height="2.2" fill="#fff" opacity="0.75"/><rect x="25.0" y="2.1" width="2.2" height="2.2" fill="#fff" opacity="0.75"/><rect x="30.5" y="2.1" width="2.2" height="2.2" fill="#fff" opacity="0.75"/><rect x="36.1" y="2.1" width="2.2" height="2.2" fill="#fff" opacity="0.75"/><rect x="2.7" y="29.7" width="2.2" height="2.2" fill="#fff" opacity="0.75"/><rect x="8.3" y="29.7" width="2.2" height="2.2" fill="#fff" opacity="0.75"/><rect x="13.8" y="29.7" width="2.2" height="2.2" fill="#fff" opacity="0.75"/><rect x="19.4" y="29.7" width="2.2" height="2.2" fill="#fff" opacity="0.75"/><rect x="25.0" y="29.7" width="2.2" height="2.2" fill="#fff" opacity="0.75"/><rect x="30.5" y="29.7" width="2.2" height="2.2" fill="#fff" opacity="0.75"/><rect x="36.1" y="29.7" width="2.2" height="2.2" fill="#fff" opacity="0.75"/><path d="M17.5 12.5 L25.5 17.5 L17.5 22.5 Z" fill="#987167"/></svg>
<div class="t" style="left:947.5px;top:858.3px;width:111.5px;overflow:hidden;font-size:28px;line-height:28px;color:#474747;">26</div>
<div class="t" style="left:1066.5px;top:858.3px;width:390.5px;overflow:hidden;font-size:28px;line-height:28px;color:#474747;letter-spacing:-0.52px;">MUC River_00004.MXF</div>
<div class="t" style="left:1467.4px;top:858.3px;width:150.6px;overflow:hidden;font-size:28px;line-height:28px;color:#474747;letter-spacing:-0.37px;">00:00:31....</div>
<div class="t" style="left:1627.6px;top:858.3px;width:130.4px;overflow:hidden;font-size:28px;line-height:28px;color:#474747;">198 MB</div>
<div class="t" style="left:1767.3px;top:858.3px;width:210.7px;overflow:hidden;font-size:28px;line-height:28px;color:#474747;"><span style="letter-spacing:0.9px">09/04/2017</span><span style="letter-spacing:-1px"> 1</span><span style="letter-spacing:-0.9px">...</span></div>
<div class="t" style="left:1987.6px;top:858.3px;width:148.4px;overflow:hidden;font-size:28px;line-height:28px;color:#474747;"><span style="letter-spacing:0.9px">09/12/2017</span><span style="letter-spacing:-1px"> 1</span><span style="letter-spacing:-0.9px">...</span></div>
<div class="r" style="left:440px;top:966px;width:1696px;height:2px;background:#d6d6d6;"></div>
<div class="r" style="left:510px;top:912px;width:10px;height:48px;background:#8ce88c;"></div>
<svg class="r" style="left:552px;top:923px;" width="32" height="33" viewBox="0 0 32 33"><g fill="none" stroke="#97562a" stroke-width="3.4"><path d="M27.5 10 V1.8 H1.8 V24 H9.7"/></g><g fill="#97562a"><rect x="0" y="0" width="30" height="6" rx="0.8"/><rect x="0" y="20.5" width="10" height="6" rx="0.8"/><rect x="14" y="14.5" width="18" height="18.5" rx="0.8"/></g><rect x="17.3" y="21" width="11.4" height="5.5" fill="#fff"/><rect x="0.9" y="1.9" width="2.2" height="2.2" fill="#fff" opacity="0.75"/><rect x="4.9" y="1.9" width="2.2" height="2.2" fill="#fff" opacity="0.75"/><rect x="8.9" y="1.9" width="2.2" height="2.2" fill="#fff" opacity="0.75"/><rect x="12.9" y="1.9" width="2.2" height="2.2" fill="#fff" opacity="0.75"/><rect x="16.9" y="1.9" width="2.2" height="2.2" fill="#fff" opacity="0.75"/><rect x="20.9" y="1.9" width="2.2" height="2.2" fill="#fff" opacity="0.75"/><rect x="24.9" y="1.9" width="2.2" height="2.2" fill="#fff" opacity="0.75"/><rect x="1.4" y="22.4" width="2.2" height="2.2" fill="#fff" opacity="0.75"/><rect x="6.4" y="22.4" width="2.2" height="2.2" fill="#fff" opacity="0.75"/><rect x="15.2" y="16.4" width="2.2" height="2.2" fill="#fff" opacity="0.75"/><rect x="19.6" y="16.4" width="2.2" height="2.2" fill="#fff" opacity="0.75"/><rect x="24.1" y="16.4" width="2.2" height="2.2" fill="#fff" opacity="0.75"/><rect x="28.6" y="16.4" width="2.2" height="2.2" fill="#fff" opacity="0.75"/><rect x="15.2" y="28.9" width="2.2" height="2.2" fill="#fff" opacity="0.75"/><rect x="19.6" y="28.9" width="2.2" height="2.2" fill="#fff" opacity="0.75"/><rect x="24.1" y="28.9" width="2.2" height="2.2" fill="#fff" opacity="0.75"/><rect x="28.6" y="28.9" width="2.2" height="2.2" fill="#fff" opacity="0.75"/></svg>
<svg class="r" style="left:764px;top:919px;" width="41" height="35" viewBox="0 0 41 35"><g fill="#987167" opacity="0.9"><rect x="0" y="0" width="41" height="34.5" rx="1"/></g><rect x="3.2" y="6.5" width="34.6" height="20.5" fill="#fff"/><rect x="2.7" y="2.1" width="2.2" height="2.2" fill="#fff" opacity="0.75"/><rect x="8.3" y="2.1" width="2.2" height="2.2" fill="#fff" opacity="0.75"/><rect x="13.8" y="2.1" width="2.2" height="2.2" fill="#fff" opacity="0.75"/><rect x="19.4" y="2.1" width="2.2" height="2.2" fill="#fff" opacity="0.75"/><rect x="25.0" y="2.1" width="2.2" height="2.2" fill="#fff" opacity="0.75"/><rect x="30.5" y="2.1" width="2.2" height="2.2" fill="#fff" opacity="0.75"/><rect x="36.1" y="2.1" width="2.2" height="2.2" fill="#fff" opacity="0.75"/><rect x="2.7" y="29.7" width="2.2" height="2.2" fill="#fff" opacity="0.75"/><rect x="8.3" y="29.7" width="2.2" height="2.2" fill="#fff" opacity="0.75"/><rect x="13.8" y="29.7" width="2.2" height="2.2" fill="#fff" opacity="0.75"/><rect x="19.4" y="29.7" width="2.2" height="2.2" fill="#fff" opacity="0.75"/><rect x="25.0" y="29.7" width="2.2" height="2.2" fill="#fff" opacity="0.75"/><rect x="30.5" y="29.7" width="2.2" height="2.2" fill="#fff" opacity="0.75"/><rect x="36.1" y="29.7" width="2.2" height="2.2" fill="#fff" opacity="0.75"/><path d="M17.5 12.5 L25.5 17.5 L17.5 22.5 Z" fill="#987167"/></svg>
<div class="t" style="left:947.5px;top:922.3px;width:111.5px;overflow:hidden;font-size:28px;line-height:28px;color:#474747;">25</div>
<div class="t" style="left:1066.5px;top:922.3px;width:390.5px;overflow:hidden;font-size:28px;line-height:28px;color:#474747;letter-spacing:-0.33px;">Starfish Dace.MOV</div>
<div class="t" style="left:1467.4px;top:922.3px;width:150.6px;overflow:hidden;font-size:28px;line-height:28px;color:#474747;letter-spacing:-0.37px;">00:00:06....</div>
<div class="t" style="left:1627.6px;top:922.3px;width:130.4px;overflow:hidden;font-size:28px;line-height:28px;color:#474747;">3.66 MB</div>
<div class="t" style="left:1767.3px;top:922.3px;width:210.7px;overflow:hidden;font-size:28px;line-height:28px;color:#474747;"><span style="letter-spacing:0.9px">09/12/2017</span><span style="letter-spacing:-1px"> 1</span><span style="letter-spacing:-0.9px">...</span></div>
<div class="t" style="left:1987.6px;top:922.3px;width:148.4px;overflow:hidden;font-size:28px;line-height:28px;color:#474747;"><span style="letter-spacing:0.9px">09/12/2017</span><span style="letter-spacing:-1px"> 1</span><span style="letter-spacing:-0.9px">...</span></div>
<div class="r" style="left:440px;top:1030px;width:1696px;height:2px;background:#d6d6d6;"></div>
<div class="r" style="left:510px;top:976px;width:10px;height:48px;background:#8ce88c;"></div>
<svg class="r" style="left:764px;top:979px;" width="42" height="41" viewBox="0 0 42 41"><g fill="#97562a"><rect x="6" y="0.5" width="35.5" height="7.2" rx="1"/><rect x="38" y="0.5" width="3.5" height="27.5"/><rect x="0.5" y="10.5" width="35.5" height="30" rx="1"/></g><rect x="4" y="18.3" width="28.5" height="15.3" fill="#fff"/><rect x="7.5" y="2.9" width="2.4" height="2.4" fill="#fff" opacity="0.75"/><rect x="12.8" y="2.9" width="2.4" height="2.4" fill="#fff" opacity="0.75"/><rect x="18.1" y="2.9" width="2.4" height="2.4" fill="#fff" opacity="0.75"/><rect x="23.5" y="2.9" width="2.4" height="2.4" fill="#fff" opacity="0.75"/><rect x="28.8" y="2.9" width="2.4" height="2.4" fill="#fff" opacity="0.75"/><rect x="34.1" y="2.9" width="2.4" height="2.4" fill="#fff" opacity="0.75"/><rect x="2.3" y="13.2" width="2.4" height="2.4" fill="#fff" opacity="0.75"/><rect x="8.2" y="13.2" width="2.4" height="2.4" fill="#fff" opacity="0.75"/><rect x="14.1" y="13.2" width="2.4" height="2.4" fill="#fff" opacity="0.75"/><rect x="20.0" y="13.2" width="2.4" height="2.4" fill="#fff" opacity="0.75"/><rect x="25.9" y="13.2" width="2.4" height="2.4" fill="#fff" opacity="0.75"/><rect x="31.8" y="13.2" width="2.4" height="2.4" fill="#fff" opacity="0.75"/><rect x="2.3" y="35.8" width="2.4" height="2.4" fill="#fff" opacity="0.75"/><rect x="8.2" y="35.8" width="2.4" height="2.4" fill="#fff" opacity="0.75"/><rect x="14.1" y="35.8" width="2.4" height="2.4" fill="#fff" opacity="0.75"/><rect x="20.0" y="35.8" width="2.4" height="2.4" fill="#fff" opacity="0.75"/><rect x="25.9" y="35.8" width="2.4" height="2.4" fill="#fff" opacity="0.75"/><rect x="31.8" y="35.8" width="2.4" height="2.4" fill="#fff" opacity="0.75"/></svg>
<div class="t" style="left:947.5px;top:986.3px;width:111.5px;overflow:hidden;font-size:28px;line-height:28px;color:#474747;">24</div>
<div class="t" style="left:1066.5px;top:986.3px;width:390.5px;overflow:hidden;font-size:28px;line-height:28px;color:#474747;">Exploring the World</div>
<div class="t" style="left:1467.4px;top:986.3px;width:150.6px;overflow:hidden;font-size:28px;line-height:28px;color:#474747;letter-spacing:-0.37px;">00:00:00....</div>
<div class="t" style="left:1627.6px;top:986.3px;width:130.4px;overflow:hidden;font-size:28px;line-height:28px;color:#474747;">4.80 KB</div>
<div class="t" style="left:1767.3px;top:986.3px;width:210.7px;overflow:hidden;font-size:28px;line-height:28px;color:#474747;"><span style="letter-spacing:0.9px">09/12/2017</span><span style="letter-spacing:-1px"> 1</span><span style="letter-spacing:-0.9px">...</span></div>
<div class="t" style="left:1987.6px;top:986.3px;width:148.4px;overflow:hidden;font-size:28px;line-height:28px;color:#474747;"><span style="letter-spacing:0.9px">09/12/2017</span><span style="letter-spacing:-1px"> 1</span><span style="letter-spacing:-0.9px">...</span></div>
<div class="r" style="left:440px;top:1030px;width:1696px;height:64px;background:#e2e0e2;"></div>
<div class="r" style="left:440px;top:1094px;width:1696px;height:2px;background:#d6d6d6;"></div>
<div class="r" style="left:510px;top:1040px;width:10px;height:48px;background:#8ce88c;"></div>
<svg class="r" style="left:460px;top:1050px;" width="30" height="30" viewBox="0 0 30 30"><rect x="1" y="1" width="28" height="28" fill="#fff" stroke="#acacac" stroke-width="2"/><path d="M7.4 15 L12.5 20 L23 9.6" fill="none" stroke="#444" stroke-width="5.2" stroke-linecap="round" stroke-linejoin="round"/></svg>
<svg class="r" style="left:694px;top:1047px;" width="43" height="35" viewBox="0 0 43 35"><path d="M5.5 2 H15.5 Q19.5 2 19.5 6 V7.5 H37 Q41 7.5 41 11.5 V29.5 Q41 33.3 37 33.3 H5.5 Q1.8 33.3 1.8 29.5 V6 Q1.8 2 5.5 2 Z" fill="none" stroke="#3f8a4f" stroke-width="3.4"/></svg>
<svg class="r" style="left:764px;top:1044px;" width="42" height="41" viewBox="0 0 42 41"><g fill="none" stroke="#fb6423" stroke-width="2.8" stroke-linecap="round"><path d="M1.5 20.5 H25.5"/><path d="M25.5 4.5 H19.5 L11 20.5 L19.5 36.5 H25.5"/></g><g fill="#fb6423"><rect x="30.5" y="0" width="11" height="10"/><rect x="30.5" y="15.5" width="11" height="10"/><rect x="30.5" y="30" width="11" height="10"/></g></svg>
<div class="t" style="left:947.5px;top:1050.3px;width:111.5px;overflow:hidden;font-size:28px;line-height:28px;color:#474747;">23</div>
<div class="t" style="left:1066.5px;top:1050.3px;width:390.5px;overflow:hidden;font-size:28px;line-height:28px;color:#474747;">Demonstration Videos</div>
<div class="t" style="left:1467.4px;top:1050.3px;width:150.6px;overflow:hidden;font-size:28px;line-height:28px;color:#474747;letter-spacing:-0.37px;">00:00:00....</div>
<div class="t" style="left:1627.6px;top:1050.3px;width:130.4px;overflow:hidden;font-size:28px;line-height:28px;color:#474747;">0 B</div>
<div class="t" style="left:1767.3px;top:1050.3px;width:210.7px;overflow:hidden;font-size:28px;line-height:28px;color:#474747;"><span style="letter-spacing:0.9px">09/12/2017</span><span style="letter-spacing:-1px"> 1</span><span style="letter-spacing:-0.9px">...</span></div>
<div class="t" style="left:1987.6px;top:1050.3px;width:148.4px;overflow:hidden;font-size:28px;line-height:28px;color:#474747;"><span style="letter-spacing:0.9px">09/12/2017</span><span style="letter-spacing:-1px"> 1</span><span style="letter-spacing:-0.9px">...</span></div>
<div class="r" style="left:440px;top:1158px;width:1696px;height:2px;background:#d6d6d6;"></div>
<div class="r" style="left:510px;top:1104px;width:10px;height:48px;background:#8ce88c;"></div>
<svg class="r" style="left:764px;top:1111px;" width="41" height="35" viewBox="0 0 41 35"><g fill="#987167" opacity="0.9"><rect x="0" y="0" width="41" height="34.5" rx="1"/></g><rect x="3.2" y="6.5" width="34.6" height="20.5" fill="#fff"/><rect x="2.7" y="2.1" width="2.2" height="2.2" fill="#fff" opacity="0.75"/><rect x="8.3" y="2.1" width="2.2" height="2.2" fill="#fff" opacity="0.75"/><rect x="13.8" y="2.1" width="2.2" height="2.2" fill="#fff" opacity="0.75"/><rect x="19.4" y="2.1" width="2.2" height="2.2" fill="#fff" opacity="0.75"/><rect x="25.0" y="2.1" width="2.2" height="2.2" fill="#fff" opacity="0.75"/><rect x="30.5" y="2.1" width="2.2" height="2.2" fill="#fff" opacity="0.75"/><rect x="36.1" y="2.1" width="2.2" height="2.2" fill="#fff" opacity="0.75"/><rect x="2.7" y="29.7" width="2.2" height="2.2" fill="#fff" opacity="0.75"/><rect x="8.3" y="29.7" width="2.2" height="2.2" fill="#fff" opacity="0.75"/><rect x="13.8" y="29.7" width="2.2" height="2.2" fill="#fff" opacity="0.75"/><rect x="19.4" y="29.7" width="2.2" height="2.2" fill="#fff" opacity="0.75"/><rect x="25.0" y="29.7" width="2.2" height="2.2" fill="#fff" opacity="0.75"/><rect x="30.5" y="29.7" width="2.2" height="2.2" fill="#fff" opacity="0.75"/><rect x="36.1" y="29.7" width="2.2" height="2.2" fill="#fff" opacity="0.75"/><path d="M17.5 12.5 L25.5 17.5 L17.5 22.5 Z" fill="#987167"/></svg>
<svg class="r" style="left:621px;top:1119px;" width="26" height="26" viewBox="0 0 26 26"><circle cx="13" cy="13" r="12.4" fill="#f00"/><rect x="11" y="5.3" width="4" height="10" fill="#fff"/><rect x="11" y="17.3" width="4" height="3.8" fill="#fff"/></svg>
<div class="t" style="left:947.5px;top:1114.3px;width:111.5px;overflow:hidden;font-size:28px;line-height:28px;color:#474747;">22</div>
<div class="t" style="left:1066.5px;top:1114.3px;width:390.5px;overflow:hidden;font-size:28px;line-height:28px;color:#474747;letter-spacing:-0.33px;">Starfish Dace.MOV</div>
<div class="t" style="left:1467.4px;top:1114.3px;width:150.6px;overflow:hidden;font-size:28px;line-height:28px;color:#474747;letter-spacing:-0.37px;">00:00:06....</div>
<div class="t" style="left:1627.6px;top:1114.3px;width:130.4px;overflow:hidden;font-size:28px;line-height:28px;color:#474747;">3.66 MB</div>
<div class="t" style="left:1767.3px;top:1114.3px;width:210.7px;overflow:hidden;font-size:28px;line-height:28px;color:#474747;"><span style="letter-spacing:0.9px">09/12/2017</span><span style="letter-spacing:-1px"> 1</span><span style="letter-spacing:-0.9px">...</span></div>
<div class="t" style="left:1987.6px;top:1114.3px;width:148.4px;overflow:hidden;font-size:28px;line-height:28px;color:#474747;"><span style="letter-spacing:0.9px">05/16/2018</span><span style="letter-spacing:-1px"> 1</span><span style="letter-spacing:-0.9px">...</span></div>
<div class="r" style="left:510px;top:1168px;width:10px;height:6px;background:#8ce88c;"></div>
<div class="r" style="left:440px;top:1174px;width:1696px;height:2px;background:#dedede;"></div>
<div class="r" style="left:440px;top:1176px;width:1696px;height:73px;background:#f7f7f7;"></div>
<div class="r" style="left:440px;top:1176px;width:2px;height:73px;background:#e4e4e4;"></div>
<div class="r" style="left:440px;top:1249px;width:1696px;height:1px;background:#e2e2e2;"></div>
<div class="r" style="left:878px;top:1184px;width:2px;height:55px;background:#dcdcdc;"></div>
<div class="t" style="left:521.0px;top:1197.6px;font-size:28px;line-height:28px;color:#4a4a4a;">1 - 48 of 48 (1 selected)</div>
<div class="r" style="left:440px;top:1252px;width:1696px;height:2px;background:#dcdcdc;"></div>
<div class="r" style="left:440px;top:1254px;width:1696px;height:10px;background:#eeeeee;"></div>
<div class="r" style="left:440px;top:1264px;width:1696px;height:2px;background:#d9d9d9;"></div>
<svg class="r" style="left:459px;top:1282px;" width="32" height="30" viewBox="0 0 32 30"><path d="M5 2.8 H10.5 Q13 2.8 13.5 5.5 L14 6.8 H26 Q29.3 6.8 29.3 10 V24.5 Q29.3 27.6 26 27.6 H5 Q2 27.6 2 24.5 V6 Q2 2.8 5 2.8 Z" fill="none" stroke="#555" stroke-width="2.6"/><text x="14.5" y="24.5" font-family="Liberation Sans" font-size="17" font-weight="bold" fill="#555" text-anchor="middle">$</text></svg>
<div class="t" style="left:498.0px;top:1280.3px;font-size:28px;line-height:28px;color:#4a4a4a;letter-spacing:-0.65px;">Story 1</div>
<svg class="r" style="left:593px;top:1284px;" width="22" height="22" viewBox="0 0 22 22"><path d="M3 3 L19 19 M19 3 L3 19" stroke="#ababab" stroke-width="5.5" stroke-linecap="round"/></svg>
<div class="r" style="left:638px;top:1274px;width:242px;height:42px;background:#e1e0e1;"></div>
<svg class="r" style="left:645px;top:1283px;" width="30" height="26" viewBox="0 0 30 26"><path d="M4 2 H11 Q13.5 2 13.5 4.5 V6 H25.5 Q28 6 28 8.5 V21.5 Q28 24 25.5 24 H4 Q1.5 24 1.5 21.5 V4.5 Q1.5 2 4 2 Z" fill="none" stroke="#555" stroke-width="2.4"/></svg>
<div class="t" style="left:682.0px;top:1280.3px;font-size:28px;line-height:28px;color:#4a4a4a;letter-spacing:-0.6px;">Demonstra...</div>
<svg class="r" style="left:850px;top:1284px;" width="22" height="22" viewBox="0 0 22 22"><path d="M3 3 L19 19 M19 3 L3 19" stroke="#ababab" stroke-width="5.5" stroke-linecap="round"/></svg>
<svg class="r" style="left:454px;top:1352px;" width="19" height="19" viewBox="0 0 19 19"><path d="M9.5 0 V19 M0 9.5 H19" stroke="#333" stroke-width="4.5"/></svg>
<div class="t" style="left:479.0px;top:1348.8px;font-size:27px;line-height:27px;color:#3d3d3d;letter-spacing:-1.2px;">NEW ENTRY</div>
<div class="r" style="left:642px;top:1352px;width:2px;height:20px;background:#444;"></div>
<svg class="r" style="left:648px;top:1356px;" width="26" height="17" viewBox="0 0 26 17"><polyline points="3.25,3.25 13.0,13.75 22.75,3.25" fill="none" stroke="#3a3a3a" stroke-width="5.5" stroke-linecap="square"/></svg>
<svg class="r" style="left:695px;top:1345px;" width="40" height="35" viewBox="0 0 40 35"><g fill="none" stroke="#555" stroke-width="3.2" stroke-linecap="round" stroke-linejoin="round"><path d="M23.6 9.8 L18.5 5.2 Q17 4 15.6 5.2 L11.8 9.2 Q10.8 10.6 11.9 11.7 L16.6 16.1"/><path d="M29 15.5 L33.8 20.2 Q34.8 21.5 33.8 22.6 L29.8 26.7 Q28.6 27.8 27.2 26.6 L22 22.2"/></g><g stroke="#b4b4b4" stroke-width="2.6" stroke-linecap="round"><path d="M26.8 4 V7.6"/><path d="M33.6 6 L30.4 8.2"/><path d="M12.3 25.7 L15.4 23.5"/><path d="M18.7 24.8 L19 28.2"/></g><g stroke="#777" stroke-width="2.6" stroke-linecap="round"><path d="M30.8 12.1 H35.4"/><path d="M10.3 20.1 H14.9"/></g></svg>
<div class="t" style="left:737.0px;top:1348.8px;font-size:27px;line-height:27px;color:#3d3d3d;letter-spacing:-1.3px;">REMOVE</div>
<div class="r" style="left:538px;top:1402px;width:2px;height:52px;background:#d9d9d9;"></div>
<div class="r" style="left:608px;top:1402px;width:2px;height:52px;background:#d9d9d9;"></div>
<div class="r" style="left:678px;top:1402px;width:2px;height:52px;background:#d9d9d9;"></div>
<div class="r" style="left:748px;top:1402px;width:2px;height:52px;background:#d9d9d9;"></div>
<div class="r" style="left:818px;top:1402px;width:2px;height:52px;background:#d9d9d9;"></div>
<div class="r" style="left:938px;top:1402px;width:2px;height:52px;background:#d9d9d9;"></div>
<div class="r" style="left:1059px;top:1402px;width:2px;height:52px;background:#d9d9d9;"></div>
<div class="r" style="left:1457px;top:1402px;width:2px;height:52px;background:#d9d9d9;"></div>
<div class="r" style="left:1618px;top:1402px;width:2px;height:52px;background:#d9d9d9;"></div>
<div class="r" style="left:1758px;top:1402px;width:2px;height:52px;background:#d9d9d9;"></div>
<div class="r" style="left:1978px;top:1402px;width:2px;height:52px;background:#d9d9d9;"></div>
<div class="r" style="left:440px;top:1454px;width:1696px;height:2px;background:#d6d6d6;"></div>
<svg class="r" style="left:460px;top:1414px;" width="30" height="30" viewBox="0 0 30 30"><rect x="1" y="1" width="28" height="28" fill="#fff" stroke="#acacac" stroke-width="2"/><path d="M7.4 15 L12.5 20 L23 9.6" fill="none" stroke="#444" stroke-width="5.2" stroke-linecap="round" stroke-linejoin="round"/></svg>
<div class="t" style="left:516.1px;top:1414.3px;width:22.7px;overflow:hidden;font-size:28px;line-height:28px;color:#4a4a4a;">In</div>
<div class="t" style="left:546.4px;top:1414.3px;width:62.4px;overflow:hidden;font-size:28px;line-height:28px;color:#4a4a4a;">LoRe</div>
<div class="t" style="left:615.8px;top:1414.3px;width:63.0px;overflow:hidden;font-size:28px;line-height:28px;color:#4a4a4a;">Error</div>
<div class="t" style="left:686.6px;top:1414.3px;width:62.2px;overflow:hidden;font-size:28px;line-height:28px;color:#4a4a4a;">Grou</div>
<div class="t" style="left:756.4px;top:1414.3px;width:62.4px;overflow:hidden;font-size:28px;line-height:28px;color:#4a4a4a;">Class</div>
<div class="t" style="left:825.5px;top:1414.3px;width:113.3px;overflow:hidden;font-size:28px;line-height:28px;color:#4a4a4a;">State</div>
<div class="t" style="left:946.2px;top:1414.3px;width:113.6px;overflow:hidden;font-size:28px;line-height:28px;color:#4a4a4a;">Id (Number)</div>
<div class="t" style="left:1066.8px;top:1414.3px;width:391.0px;overflow:hidden;font-size:28px;line-height:28px;color:#4a4a4a;">Title</div>
<div class="t" style="left:1465.8px;top:1414.3px;width:153.0px;overflow:hidden;font-size:28px;line-height:28px;color:#4a4a4a;">Duration</div>
<div class="t" style="left:1625.8px;top:1414.3px;width:133.0px;overflow:hidden;font-size:28px;line-height:28px;color:#4a4a4a;">FileSize</div>
<div class="t" style="left:1765.8px;top:1414.3px;width:213.0px;overflow:hidden;font-size:28px;line-height:28px;color:#4a4a4a;">Created</div>
<div class="t" style="left:1986.3px;top:1414.3px;width:150.5px;overflow:hidden;font-size:28px;line-height:28px;color:#4a4a4a;">Changed</div>
<div class="r" style="left:440px;top:1456px;width:1696px;height:448px;background:#bde9f0;"></div>
<div class="r" style="left:510px;top:1464px;width:10px;height:48px;background:#8ce88c;"></div>
<svg class="r" style="left:460px;top:1474px;" width="30" height="30" viewBox="0 0 30 30"><rect x="1" y="1" width="28" height="28" fill="#fff" stroke="#acacac" stroke-width="2"/><path d="M7.4 15 L12.5 20 L23 9.6" fill="none" stroke="#444" stroke-width="5.2" stroke-linecap="round" stroke-linejoin="round"/></svg>
<svg class="r" style="left:552px;top:1475px;" width="32" height="33" viewBox="0 0 32 33"><g fill="none" stroke="#97562a" stroke-width="3.4"><path d="M27.5 10 V1.8 H1.8 V24 H9.7"/></g><g fill="#97562a"><rect x="0" y="0" width="30" height="6" rx="0.8"/><rect x="0" y="20.5" width="10" height="6" rx="0.8"/><rect x="14" y="14.5" width="18" height="18.5" rx="0.8"/></g><rect x="17.3" y="21" width="11.4" height="5.5" fill="#bde9f0"/><rect x="0.9" y="1.9" width="2.2" height="2.2" fill="#bde9f0" opacity="0.75"/><rect x="4.9" y="1.9" width="2.2" height="2.2" fill="#bde9f0" opacity="0.75"/><rect x="8.9" y="1.9" width="2.2" height="2.2" fill="#bde9f0" opacity="0.75"/><rect x="12.9" y="1.9" width="2.2" height="2.2" fill="#bde9f0" opacity="0.75"/><rect x="16.9" y="1.9" width="2.2" height="2.2" fill="#bde9f0" opacity="0.75"/><rect x="20.9" y="1.9" width="2.2" height="2.2" fill="#bde9f0" opacity="0.75"/><rect x="24.9" y="1.9" width="2.2" height="2.2" fill="#bde9f0" opacity="0.75"/><rect x="1.4" y="22.4" width="2.2" height="2.2" fill="#bde9f0" opacity="0.75"/><rect x="6.4" y="22.4" width="2.2" height="2.2" fill="#bde9f0" opacity="0.75"/><rect x="15.2" y="16.4" width="2.2" height="2.2" fill="#bde9f0" opacity="0.75"/><rect x="19.6" y="16.4" width="2.2" height="2.2" fill="#bde9f0" opacity="0.75"/><rect x="24.1" y="16.4" width="2.2" height="2.2" fill="#bde9f0" opacity="0.75"/><rect x="28.6" y="16.4" width="2.2" height="2.2" fill="#bde9f0" opacity="0.75"/><rect x="15.2" y="28.9" width="2.2" height="2.2" fill="#bde9f0" opacity="0.75"/><rect x="19.6" y="28.9" width="2.2" height="2.2" fill="#bde9f0" opacity="0.75"/><rect x="24.1" y="28.9" width="2.2" height="2.2" fill="#bde9f0" opacity="0.75"/><rect x="28.6" y="28.9" width="2.2" height="2.2" fill="#bde9f0" opacity="0.75"/></svg>
<svg class="r" style="left:764px;top:1471px;" width="41" height="35" viewBox="0 0 41 35"><g fill="#987167" opacity="0.9"><rect x="0" y="0" width="41" height="34.5" rx="1"/></g><rect x="3.2" y="6.5" width="34.6" height="20.5" fill="#bde9f0"/><rect x="2.7" y="2.1" width="2.2" height="2.2" fill="#bde9f0" opacity="0.75"/><rect x="8.3" y="2.1" width="2.2" height="2.2" fill="#bde9f0" opacity="0.75"/><rect x="13.8" y="2.1" width="2.2" height="2.2" fill="#bde9f0" opacity="0.75"/><rect x="19.4" y="2.1" width="2.2" height="2.2" fill="#bde9f0" opacity="0.75"/><rect x="25.0" y="2.1" width="2.2" height="2.2" fill="#bde9f0" opacity="0.75"/><rect x="30.5" y="2.1" width="2.2" height="2.2" fill="#bde9f0" opacity="0.75"/><rect x="36.1" y="2.1" width="2.2" height="2.2" fill="#bde9f0" opacity="0.75"/><rect x="2.7" y="29.7" width="2.2" height="2.2" fill="#bde9f0" opacity="0.75"/><rect x="8.3" y="29.7" width="2.2" height="2.2" fill="#bde9f0" opacity="0.75"/><rect x="13.8" y="29.7" width="2.2" height="2.2" fill="#bde9f0" opacity="0.75"/><rect x="19.4" y="29.7" width="2.2" height="2.2" fill="#bde9f0" opacity="0.75"/><rect x="25.0" y="29.7" width="2.2" height="2.2" fill="#bde9f0" opacity="0.75"/><rect x="30.5" y="29.7" width="2.2" height="2.2" fill="#bde9f0" opacity="0.75"/><rect x="36.1" y="29.7" width="2.2" height="2.2" fill="#bde9f0" opacity="0.75"/><path d="M17.5 12.5 L25.5 17.5 L17.5 22.5 Z" fill="#987167"/></svg>
<div class="t" style="left:947.5px;top:1474.3px;width:111.5px;overflow:hidden;font-size:28px;line-height:28px;color:#474747;">16</div>
<div class="t" style="left:1066.5px;top:1474.3px;width:390.5px;overflow:hidden;font-size:28px;line-height:28px;color:#474747;">Antilopes.MOV</div>
<div class="t" style="left:1467.4px;top:1474.3px;width:150.6px;overflow:hidden;font-size:28px;line-height:28px;color:#474747;letter-spacing:-0.37px;">00:00:07....</div>
<div class="t" style="left:1627.6px;top:1474.3px;width:130.4px;overflow:hidden;font-size:28px;line-height:28px;color:#474747;">13.0 MB</div>
<div class="t" style="left:1767.3px;top:1474.3px;width:210.7px;overflow:hidden;font-size:28px;line-height:28px;color:#474747;"><span style="letter-spacing:0.9px">09/12/2017</span><span style="letter-spacing:-1px"> 1</span><span style="letter-spacing:-0.9px">...</span></div>
<div class="t" style="left:1987.6px;top:1474.3px;width:148.4px;overflow:hidden;font-size:28px;line-height:28px;color:#474747;"><span style="letter-spacing:0.9px">05/16/2018</span><span style="letter-spacing:-1px"> 1</span><span style="letter-spacing:-0.9px">...</span></div>
<div class="r" style="left:510px;top:1528px;width:10px;height:48px;background:#8ce88c;"></div>
<svg class="r" style="left:460px;top:1538px;" width="30" height="30" viewBox="0 0 30 30"><rect x="1" y="1" width="28" height="28" fill="#fff" stroke="#acacac" stroke-width="2"/><path d="M7.4 15 L12.5 20 L23 9.6" fill="none" stroke="#444" stroke-width="5.2" stroke-linecap="round" stroke-linejoin="round"/></svg>
<svg class="r" style="left:552px;top:1539px;" width="32" height="33" viewBox="0 0 32 33"><g fill="none" stroke="#97562a" stroke-width="3.4"><path d="M27.5 10 V1.8 H1.8 V24 H9.7"/></g><g fill="#97562a"><rect x="0" y="0" width="30" height="6" rx="0.8"/><rect x="0" y="20.5" width="10" height="6" rx="0.8"/><rect x="14" y="14.5" width="18" height="18.5" rx="0.8"/></g><rect x="17.3" y="21" width="11.4" height="5.5" fill="#bde9f0"/><rect x="0.9" y="1.9" width="2.2" height="2.2" fill="#bde9f0" opacity="0.75"/><rect x="4.9" y="1.9" width="2.2" height="2.2" fill="#bde9f0" opacity="0.75"/><rect x="8.9" y="1.9" width="2.2" height="2.2" fill="#bde9f0" opacity="0.75"/><rect x="12.9" y="1.9" width="2.2" height="2.2" fill="#bde9f0" opacity="0.75"/><rect x="16.9" y="1.9" width="2.2" height="2.2" fill="#bde9f0" opacity="0.75"/><rect x="20.9" y="1.9" width="2.2" height="2.2" fill="#bde9f0" opacity="0.75"/><rect x="24.9" y="1.9" width="2.2" height="2.2" fill="#bde9f0" opacity="0.75"/><rect x="1.4" y="22.4" width="2.2" height="2.2" fill="#bde9f0" opacity="0.75"/><rect x="6.4" y="22.4" width="2.2" height="2.2" fill="#bde9f0" opacity="0.75"/><rect x="15.2" y="16.4" width="2.2" height="2.2" fill="#bde9f0" opacity="0.75"/><rect x="19.6" y="16.4" width="2.2" height="2.2" fill="#bde9f0" opacity="0.75"/><rect x="24.1" y="16.4" width="2.2" height="2.2" fill="#bde9f0" opacity="0.75"/><rect x="28.6" y="16.4" width="2.2" height="2.2" fill="#bde9f0" opacity="0.75"/><rect x="15.2" y="28.9" width="2.2" height="2.2" fill="#bde9f0" opacity="0.75"/><rect x="19.6" y="28.9" width="2.2" height="2.2" fill="#bde9f0" opacity="0.75"/><rect x="24.1" y="28.9" width="2.2" height="2.2" fill="#bde9f0" opacity="0.75"/><rect x="28.6" y="28.9" width="2.2" height="2.2" fill="#bde9f0" opacity="0.75"/></svg>
<svg class="r" style="left:764px;top:1535px;" width="41" height="35" viewBox="0 0 41 35"><g fill="#987167" opacity="0.9"><rect x="0" y="0" width="41" height="34.5" rx="1"/></g><rect x="3.2" y="6.5" width="34.6" height="20.5" fill="#bde9f0"/><rect x="2.7" y="2.1" width="2.2" height="2.2" fill="#bde9f0" opacity="0.75"/><rect x="8.3" y="2.1" width="2.2" height="2.2" fill="#bde9f0" opacity="0.75"/><rect x="13.8" y="2.1" width="2.2" height="2.2" fill="#bde9f0" opacity="0.75"/><rect x="19.4" y="2.1" width="2.2" height="2.2" fill="#bde9f0" opacity="0.75"/><rect x="25.0" y="2.1" width="2.2" height="2.2" fill="#bde9f0" opacity="0.75"/><rect x="30.5" y="2.1" width="2.2" height="2.2" fill="#bde9f0" opacity="0.75"/><rect x="36.1" y="2.1" width="2.2" height="2.2" fill="#bde9f0" opacity="0.75"/><rect x="2.7" y="29.7" width="2.2" height="2.2" fill="#bde9f0" opacity="0.75"/><rect x="8.3" y="29.7" width="2.2" height="2.2" fill="#bde9f0" opacity="0.75"/><rect x="13.8" y="29.7" width="2.2" height="2.2" fill="#bde9f0" opacity="0.75"/><rect x="19.4" y="29.7" width="2.2" height="2.2" fill="#bde9f0" opacity="0.75"/><rect x="25.0" y="29.7" width="2.2" height="2.2" fill="#bde9f0" opacity="0.75"/><rect x="30.5" y="29.7" width="2.2" height="2.2" fill="#bde9f0" opacity="0.75"/><rect x="36.1" y="29.7" width="2.2" height="2.2" fill="#bde9f0" opacity="0.75"/><path d="M17.5 12.5 L25.5 17.5 L17.5 22.5 Z" fill="#987167"/></svg>
<div class="t" style="left:947.5px;top:1538.3px;width:111.5px;overflow:hidden;font-size:28px;line-height:28px;color:#474747;">17</div>
<div class="t" style="left:1066.5px;top:1538.3px;width:390.5px;overflow:hidden;font-size:28px;line-height:28px;color:#474747;letter-spacing:-0.6px;">Seals.MOV</div>
<div class="t" style="left:1467.4px;top:1538.3px;width:150.6px;overflow:hidden;font-size:28px;line-height:28px;color:#474747;letter-spacing:-0.37px;">00:00:09....</div>
<div class="t" style="left:1627.6px;top:1538.3px;width:130.4px;overflow:hidden;font-size:28px;line-height:28px;color:#474747;">5.47 MB</div>
<div class="t" style="left:1767.3px;top:1538.3px;width:210.7px;overflow:hidden;font-size:28px;line-height:28px;color:#474747;"><span style="letter-spacing:0.9px">09/12/2017</span><span style="letter-spacing:-1px"> 1</span><span style="letter-spacing:-0.9px">...</span></div>
<div class="t" style="left:1987.6px;top:1538.3px;width:148.4px;overflow:hidden;font-size:28px;line-height:28px;color:#474747;"><span style="letter-spacing:0.9px">05/16/2018</span><span style="letter-spacing:-1px"> 1</span><span style="letter-spacing:-0.9px">...</span></div>
<div class="r" style="left:510px;top:1592px;width:10px;height:48px;background:#8ce88c;"></div>
<svg class="r" style="left:460px;top:1602px;" width="30" height="30" viewBox="0 0 30 30"><rect x="1" y="1" width="28" height="28" fill="#fff" stroke="#acacac" stroke-width="2"/><path d="M7.4 15 L12.5 20 L23 9.6" fill="none" stroke="#444" stroke-width="5.2" stroke-linecap="round" stroke-linejoin="round"/></svg>
<svg class="r" style="left:552px;top:1603px;" width="32" height="33" viewBox="0 0 32 33"><g fill="none" stroke="#97562a" stroke-width="3.4"><path d="M27.5 10 V1.8 H1.8 V24 H9.7"/></g><g fill="#97562a"><rect x="0" y="0" width="30" height="6" rx="0.8"/><rect x="0" y="20.5" width="10" height="6" rx="0.8"/><rect x="14" y="14.5" width="18" height="18.5" rx="0.8"/></g><rect x="17.3" y="21" width="11.4" height="5.5" fill="#bde9f0"/><rect x="0.9" y="1.9" width="2.2" height="2.2" fill="#bde9f0" opacity="0.75"/><rect x="4.9" y="1.9" width="2.2" height="2.2" fill="#bde9f0" opacity="0.75"/><rect x="8.9" y="1.9" width="2.2" height="2.2" fill="#bde9f0" opacity="0.75"/><rect x="12.9" y="1.9" width="2.2" height="2.2" fill="#bde9f0" opacity="0.75"/><rect x="16.9" y="1.9" width="2.2" height="2.2" fill="#bde9f0" opacity="0.75"/><rect x="20.9" y="1.9" width="2.2" height="2.2" fill="#bde9f0" opacity="0.75"/><rect x="24.9" y="1.9" width="2.2" height="2.2" fill="#bde9f0" opacity="0.75"/><rect x="1.4" y="22.4" width="2.2" height="2.2" fill="#bde9f0" opacity="0.75"/><rect x="6.4" y="22.4" width="2.2" height="2.2" fill="#bde9f0" opacity="0.75"/><rect x="15.2" y="16.4" width="2.2" height="2.2" fill="#bde9f0" opacity="0.75"/><rect x="19.6" y="16.4" width="2.2" height="2.2" fill="#bde9f0" opacity="0.75"/><rect x="24.1" y="16.4" width="2.2" height="2.2" fill="#bde9f0" opacity="0.75"/><rect x="28.6" y="16.4" width="2.2" height="2.2" fill="#bde9f0" opacity="0.75"/><rect x="15.2" y="28.9" width="2.2" height="2.2" fill="#bde9f0" opacity="0.75"/><rect x="19.6" y="28.9" width="2.2" height="2.2" fill="#bde9f0" opacity="0.75"/><rect x="24.1" y="28.9" width="2.2" height="2.2" fill="#bde9f0" opacity="0.75"/><rect x="28.6" y="28.9" width="2.2" height="2.2" fill="#bde9f0" opacity="0.75"/></svg>
<svg class="r" style="left:764px;top:1599px;" width="41" height="35" viewBox="0 0 41 35"><g fill="#987167" opacity="0.9"><rect x="0" y="0" width="41" height="34.5" rx="1"/></g><rect x="3.2" y="6.5" width="34.6" height="20.5" fill="#bde9f0"/><rect x="2.7" y="2.1" width="2.2" height="2.2" fill="#bde9f0" opacity="0.75"/><rect x="8.3" y="2.1" width="2.2" height="2.2" fill="#bde9f0" opacity="0.75"/><rect x="13.8" y="2.1" width="2.2" height="2.2" fill="#bde9f0" opacity="0.75"/><rect x="19.4" y="2.1" width="2.2" height="2.2" fill="#bde9f0" opacity="0.75"/><rect x="25.0" y="2.1" width="2.2" height="2.2" fill="#bde9f0" opacity="0.75"/><rect x="30.5" y="2.1" width="2.2" height="2.2" fill="#bde9f0" opacity="0.75"/><rect x="36.1" y="2.1" width="2.2" height="2.2" fill="#bde9f0" opacity="0.75"/><rect x="2.7" y="29.7" width="2.2" height="2.2" fill="#bde9f0" opacity="0.75"/><rect x="8.3" y="29.7" width="2.2" height="2.2" fill="#bde9f0" opacity="0.75"/><rect x="13.8" y="29.7" width="2.2" height="2.2" fill="#bde9f0" opacity="0.75"/><rect x="19.4" y="29.7" width="2.2" height="2.2" fill="#bde9f0" opacity="0.75"/><rect x="25.0" y="29.7" width="2.2" height="2.2" fill="#bde9f0" opacity="0.75"/><rect x="30.5" y="29.7" width="2.2" height="2.2" fill="#bde9f0" opacity="0.75"/><rect x="36.1" y="29.7" width="2.2" height="2.2" fill="#bde9f0" opacity="0.75"/><path d="M17.5 12.5 L25.5 17.5 L17.5 22.5 Z" fill="#987167"/></svg>
<div class="t" style="left:947.5px;top:1602.3px;width:111.5px;overflow:hidden;font-size:28px;line-height:28px;color:#474747;">18</div>
<div class="t" style="left:1066.5px;top:1602.3px;width:390.5px;overflow:hidden;font-size:28px;line-height:28px;color:#474747;letter-spacing:-0.42px;">Carousel.MOV</div>
<div class="t" style="left:1467.4px;top:1602.3px;width:150.6px;overflow:hidden;font-size:28px;line-height:28px;color:#474747;letter-spacing:-0.37px;">00:00:04....</div>
<div class="t" style="left:1627.6px;top:1602.3px;width:130.4px;overflow:hidden;font-size:28px;line-height:28px;color:#474747;">2.29 MB</div>
<div class="t" style="left:1767.3px;top:1602.3px;width:210.7px;overflow:hidden;font-size:28px;line-height:28px;color:#474747;"><span style="letter-spacing:0.9px">09/12/2017</span><span style="letter-spacing:-1px"> 1</span><span style="letter-spacing:-0.9px">...</span></div>
<div class="t" style="left:1987.6px;top:1602.3px;width:148.4px;overflow:hidden;font-size:28px;line-height:28px;color:#474747;"><span style="letter-spacing:0.9px">05/16/2018</span><span style="letter-spacing:-1px"> 1</span><span style="letter-spacing:-0.9px">...</span></div>
<div class="r" style="left:510px;top:1656px;width:10px;height:48px;background:#8ce88c;"></div>
<svg class="r" style="left:460px;top:1666px;" width="30" height="30" viewBox="0 0 30 30"><rect x="1" y="1" width="28" height="28" fill="#fff" stroke="#acacac" stroke-width="2"/><path d="M7.4 15 L12.5 20 L23 9.6" fill="none" stroke="#444" stroke-width="5.2" stroke-linecap="round" stroke-linejoin="round"/></svg>
<svg class="r" style="left:552px;top:1667px;" width="32" height="33" viewBox="0 0 32 33"><g fill="none" stroke="#97562a" stroke-width="3.4"><path d="M27.5 10 V1.8 H1.8 V24 H9.7"/></g><g fill="#97562a"><rect x="0" y="0" width="30" height="6" rx="0.8"/><rect x="0" y="20.5" width="10" height="6" rx="0.8"/><rect x="14" y="14.5" width="18" height="18.5" rx="0.8"/></g><rect x="17.3" y="21" width="11.4" height="5.5" fill="#bde9f0"/><rect x="0.9" y="1.9" width="2.2" height="2.2" fill="#bde9f0" opacity="0.75"/><rect x="4.9" y="1.9" width="2.2" height="2.2" fill="#bde9f0" opacity="0.75"/><rect x="8.9" y="1.9" width="2.2" height="2.2" fill="#bde9f0" opacity="0.75"/><rect x="12.9" y="1.9" width="2.2" height="2.2" fill="#bde9f0" opacity="0.75"/><rect x="16.9" y="1.9" width="2.2" height="2.2" fill="#bde9f0" opacity="0.75"/><rect x="20.9" y="1.9" width="2.2" height="2.2" fill="#bde9f0" opacity="0.75"/><rect x="24.9" y="1.9" width="2.2" height="2.2" fill="#bde9f0" opacity="0.75"/><rect x="1.4" y="22.4" width="2.2" height="2.2" fill="#bde9f0" opacity="0.75"/><rect x="6.4" y="22.4" width="2.2" height="2.2" fill="#bde9f0" opacity="0.75"/><rect x="15.2" y="16.4" width="2.2" height="2.2" fill="#bde9f0" opacity="0.75"/><rect x="19.6" y="16.4" width="2.2" height="2.2" fill="#bde9f0" opacity="0.75"/><rect x="24.1" y="16.4" width="2.2" height="2.2" fill="#bde9f0" opacity="0.75"/><rect x="28.6" y="16.4" width="2.2" height="2.2" fill="#bde9f0" opacity="0.75"/><rect x="15.2" y="28.9" width="2.2" height="2.2" fill="#bde9f0" opacity="0.75"/><rect x="19.6" y="28.9" width="2.2" height="2.2" fill="#bde9f0" opacity="0.75"/><rect x="24.1" y="28.9" width="2.2" height="2.2" fill="#bde9f0" opacity="0.75"/><rect x="28.6" y="28.9" width="2.2" height="2.2" fill="#bde9f0" opacity="0.75"/></svg>
<svg class="r" style="left:764px;top:1663px;" width="41" height="35" viewBox="0 0 41 35"><g fill="#987167" opacity="0.9"><rect x="0" y="0" width="41" height="34.5" rx="1"/></g><rect x="3.2" y="6.5" width="34.6" height="20.5" fill="#bde9f0"/><rect x="2.7" y="2.1" width="2.2" height="2.2" fill="#bde9f0" opacity="0.75"/><rect x="8.3" y="2.1" width="2.2" height="2.2" fill="#bde9f0" opacity="0.75"/><rect x="13.8" y="2.1" width="2.2" height="2.2" fill="#bde9f0" opacity="0.75"/><rect x="19.4" y="2.1" width="2.2" height="2.2" fill="#bde9f0" opacity="0.75"/><rect x="25.0" y="2.1" width="2.2" height="2.2" fill="#bde9f0" opacity="0.75"/><rect x="30.5" y="2.1" width="2.2" height="2.2" fill="#bde9f0" opacity="0.75"/><rect x="36.1" y="2.1" width="2.2" height="2.2" fill="#bde9f0" opacity="0.75"/><rect x="2.7" y="29.7" width="2.2" height="2.2" fill="#bde9f0" opacity="0.75"/><rect x="8.3" y="29.7" width="2.2" height="2.2" fill="#bde9f0" opacity="0.75"/><rect x="13.8" y="29.7" width="2.2" height="2.2" fill="#bde9f0" opacity="0.75"/><rect x="19.4" y="29.7" width="2.2" height="2.2" fill="#bde9f0" opacity="0.75"/><rect x="25.0" y="29.7" width="2.2" height="2.2" fill="#bde9f0" opacity="0.75"/><rect x="30.5" y="29.7" width="2.2" height="2.2" fill="#bde9f0" opacity="0.75"/><rect x="36.1" y="29.7" width="2.2" height="2.2" fill="#bde9f0" opacity="0.75"/><path d="M17.5 12.5 L25.5 17.5 L17.5 22.5 Z" fill="#987167"/></svg>
<div class="t" style="left:947.5px;top:1666.3px;width:111.5px;overflow:hidden;font-size:28px;line-height:28px;color:#474747;">19</div>
<div class="t" style="left:1066.5px;top:1666.3px;width:390.5px;overflow:hidden;font-size:28px;line-height:28px;color:#474747;letter-spacing:-0.39px;">Bird in a Tree.MOV</div>
<div class="t" style="left:1467.4px;top:1666.3px;width:150.6px;overflow:hidden;font-size:28px;line-height:28px;color:#474747;letter-spacing:-0.37px;">00:00:20....</div>
<div class="t" style="left:1627.6px;top:1666.3px;width:130.4px;overflow:hidden;font-size:28px;line-height:28px;color:#474747;">28.6 MB</div>
<div class="t" style="left:1767.3px;top:1666.3px;width:210.7px;overflow:hidden;font-size:28px;line-height:28px;color:#474747;"><span style="letter-spacing:0.9px">09/12/2017</span><span style="letter-spacing:-1px"> 1</span><span style="letter-spacing:-0.9px">...</span></div>
<div class="t" style="left:1987.6px;top:1666.3px;width:148.4px;overflow:hidden;font-size:28px;line-height:28px;color:#474747;"><span style="letter-spacing:0.9px">09/12/2017</span><span style="letter-spacing:-1px"> 1</span><span style="letter-spacing:-0.9px">...</span></div>
<div class="r" style="left:510px;top:1720px;width:10px;height:48px;background:#8ce88c;"></div>
<svg class="r" style="left:460px;top:1730px;" width="30" height="30" viewBox="0 0 30 30"><rect x="1" y="1" width="28" height="28" fill="#fff" stroke="#acacac" stroke-width="2"/><path d="M7.4 15 L12.5 20 L23 9.6" fill="none" stroke="#444" stroke-width="5.2" stroke-linecap="round" stroke-linejoin="round"/></svg>
<svg class="r" style="left:552px;top:1731px;" width="32" height="33" viewBox="0 0 32 33"><g fill="none" stroke="#97562a" stroke-width="3.4"><path d="M27.5 10 V1.8 H1.8 V24 H9.7"/></g><g fill="#97562a"><rect x="0" y="0" width="30" height="6" rx="0.8"/><rect x="0" y="20.5" width="10" height="6" rx="0.8"/><rect x="14" y="14.5" width="18" height="18.5" rx="0.8"/></g><rect x="17.3" y="21" width="11.4" height="5.5" fill="#bde9f0"/><rect x="0.9" y="1.9" width="2.2" height="2.2" fill="#bde9f0" opacity="0.75"/><rect x="4.9" y="1.9" width="2.2" height="2.2" fill="#bde9f0" opacity="0.75"/><rect x="8.9" y="1.9" width="2.2" height="2.2" fill="#bde9f0" opacity="0.75"/><rect x="12.9" y="1.9" width="2.2" height="2.2" fill="#bde9f0" opacity="0.75"/><rect x="16.9" y="1.9" width="2.2" height="2.2" fill="#bde9f0" opacity="0.75"/><rect x="20.9" y="1.9" width="2.2" height="2.2" fill="#bde9f0" opacity="0.75"/><rect x="24.9" y="1.9" width="2.2" height="2.2" fill="#bde9f0" opacity="0.75"/><rect x="1.4" y="22.4" width="2.2" height="2.2" fill="#bde9f0" opacity="0.75"/><rect x="6.4" y="22.4" width="2.2" height="2.2" fill="#bde9f0" opacity="0.75"/><rect x="15.2" y="16.4" width="2.2" height="2.2" fill="#bde9f0" opacity="0.75"/><rect x="19.6" y="16.4" width="2.2" height="2.2" fill="#bde9f0" opacity="0.75"/><rect x="24.1" y="16.4" width="2.2" height="2.2" fill="#bde9f0" opacity="0.75"/><rect x="28.6" y="16.4" width="2.2" height="2.2" fill="#bde9f0" opacity="0.75"/><rect x="15.2" y="28.9" width="2.2" height="2.2" fill="#bde9f0" opacity="0.75"/><rect x="19.6" y="28.9" width="2.2" height="2.2" fill="#bde9f0" opacity="0.75"/><rect x="24.1" y="28.9" width="2.2" height="2.2" fill="#bde9f0" opacity="0.75"/><rect x="28.6" y="28.9" width="2.2" height="2.2" fill="#bde9f0" opacity="0.75"/></svg>
<svg class="r" style="left:764px;top:1727px;" width="41" height="35" viewBox="0 0 41 35"><g fill="#987167" opacity="0.9"><rect x="0" y="0" width="41" height="34.5" rx="1"/></g><rect x="3.2" y="6.5" width="34.6" height="20.5" fill="#bde9f0"/><rect x="2.7" y="2.1" width="2.2" height="2.2" fill="#bde9f0" opacity="0.75"/><rect x="8.3" y="2.1" width="2.2" height="2.2" fill="#bde9f0" opacity="0.75"/><rect x="13.8" y="2.1" width="2.2" height="2.2" fill="#bde9f0" opacity="0.75"/><rect x="19.4" y="2.1" width="2.2" height="2.2" fill="#bde9f0" opacity="0.75"/><rect x="25.0" y="2.1" width="2.2" height="2.2" fill="#bde9f0" opacity="0.75"/><rect x="30.5" y="2.1" width="2.2" height="2.2" fill="#bde9f0" opacity="0.75"/><rect x="36.1" y="2.1" width="2.2" height="2.2" fill="#bde9f0" opacity="0.75"/><rect x="2.7" y="29.7" width="2.2" height="2.2" fill="#bde9f0" opacity="0.75"/><rect x="8.3" y="29.7" width="2.2" height="2.2" fill="#bde9f0" opacity="0.75"/><rect x="13.8" y="29.7" width="2.2" height="2.2" fill="#bde9f0" opacity="0.75"/><rect x="19.4" y="29.7" width="2.2" height="2.2" fill="#bde9f0" opacity="0.75"/><rect x="25.0" y="29.7" width="2.2" height="2.2" fill="#bde9f0" opacity="0.75"/><rect x="30.5" y="29.7" width="2.2" height="2.2" fill="#bde9f0" opacity="0.75"/><rect x="36.1" y="29.7" width="2.2" height="2.2" fill="#bde9f0" opacity="0.75"/><path d="M17.5 12.5 L25.5 17.5 L17.5 22.5 Z" fill="#987167"/></svg>
<div class="t" style="left:947.5px;top:1730.3px;width:111.5px;overflow:hidden;font-size:28px;line-height:28px;color:#474747;">20</div>
<div class="t" style="left:1066.5px;top:1730.3px;width:390.5px;overflow:hidden;font-size:28px;line-height:28px;color:#474747;letter-spacing:-0.33px;">Surf Costa Rica.MOV</div>
<div class="t" style="left:1467.4px;top:1730.3px;width:150.6px;overflow:hidden;font-size:28px;line-height:28px;color:#474747;letter-spacing:-0.37px;">00:00:18....</div>
<div class="t" style="left:1627.6px;top:1730.3px;width:130.4px;overflow:hidden;font-size:28px;line-height:28px;color:#474747;">11.6 MB</div>
<div class="t" style="left:1767.3px;top:1730.3px;width:210.7px;overflow:hidden;font-size:28px;line-height:28px;color:#474747;"><span style="letter-spacing:0.9px">09/12/2017</span><span style="letter-spacing:-1px"> 1</span><span style="letter-spacing:-0.9px">...</span></div>
<div class="t" style="left:1987.6px;top:1730.3px;width:148.4px;overflow:hidden;font-size:28px;line-height:28px;color:#474747;"><span style="letter-spacing:0.9px">05/16/2018</span><span style="letter-spacing:-1px"> 1</span><span style="letter-spacing:-0.9px">...</span></div>
<div class="r" style="left:510px;top:1784px;width:10px;height:48px;background:#8ce88c;"></div>
<svg class="r" style="left:460px;top:1794px;" width="30" height="30" viewBox="0 0 30 30"><rect x="1" y="1" width="28" height="28" fill="#fff" stroke="#acacac" stroke-width="2"/><path d="M7.4 15 L12.5 20 L23 9.6" fill="none" stroke="#444" stroke-width="5.2" stroke-linecap="round" stroke-linejoin="round"/></svg>
<svg class="r" style="left:552px;top:1795px;" width="32" height="33" viewBox="0 0 32 33"><g fill="none" stroke="#97562a" stroke-width="3.4"><path d="M27.5 10 V1.8 H1.8 V24 H9.7"/></g><g fill="#97562a"><rect x="0" y="0" width="30" height="6" rx="0.8"/><rect x="0" y="20.5" width="10" height="6" rx="0.8"/><rect x="14" y="14.5" width="18" height="18.5" rx="0.8"/></g><rect x="17.3" y="21" width="11.4" height="5.5" fill="#bde9f0"/><rect x="0.9" y="1.9" width="2.2" height="2.2" fill="#bde9f0" opacity="0.75"/><rect x="4.9" y="1.9" width="2.2" height="2.2" fill="#bde9f0" opacity="0.75"/><rect x="8.9" y="1.9" width="2.2" height="2.2" fill="#bde9f0" opacity="0.75"/><rect x="12.9" y="1.9" width="2.2" height="2.2" fill="#bde9f0" opacity="0.75"/><rect x="16.9" y="1.9" width="2.2" height="2.2" fill="#bde9f0" opacity="0.75"/><rect x="20.9" y="1.9" width="2.2" height="2.2" fill="#bde9f0" opacity="0.75"/><rect x="24.9" y="1.9" width="2.2" height="2.2" fill="#bde9f0" opacity="0.75"/><rect x="1.4" y="22.4" width="2.2" height="2.2" fill="#bde9f0" opacity="0.75"/><rect x="6.4" y="22.4" width="2.2" height="2.2" fill="#bde9f0" opacity="0.75"/><rect x="15.2" y="16.4" width="2.2" height="2.2" fill="#bde9f0" opacity="0.75"/><rect x="19.6" y="16.4" width="2.2" height="2.2" fill="#bde9f0" opacity="0.75"/><rect x="24.1" y="16.4" width="2.2" height="2.2" fill="#bde9f0" opacity="0.75"/><rect x="28.6" y="16.4" width="2.2" height="2.2" fill="#bde9f0" opacity="0.75"/><rect x="15.2" y="28.9" width="2.2" height="2.2" fill="#bde9f0" opacity="0.75"/><rect x="19.6" y="28.9" width="2.2" height="2.2" fill="#bde9f0" opacity="0.75"/><rect x="24.1" y="28.9" width="2.2" height="2.2" fill="#bde9f0" opacity="0.75"/><rect x="28.6" y="28.9" width="2.2" height="2.2" fill="#bde9f0" opacity="0.75"/></svg>
<svg class="r" style="left:764px;top:1791px;" width="41" height="35" viewBox="0 0 41 35"><g fill="#987167" opacity="0.9"><rect x="0" y="0" width="41" height="34.5" rx="1"/></g><rect x="3.2" y="6.5" width="34.6" height="20.5" fill="#bde9f0"/><rect x="2.7" y="2.1" width="2.2" height="2.2" fill="#bde9f0" opacity="0.75"/><rect x="8.3" y="2.1" width="2.2" height="2.2" fill="#bde9f0" opacity="0.75"/><rect x="13.8" y="2.1" width="2.2" height="2.2" fill="#bde9f0" opacity="0.75"/><rect x="19.4" y="2.1" width="2.2" height="2.2" fill="#bde9f0" opacity="0.75"/><rect x="25.0" y="2.1" width="2.2" height="2.2" fill="#bde9f0" opacity="0.75"/><rect x="30.5" y="2.1" width="2.2" height="2.2" fill="#bde9f0" opacity="0.75"/><rect x="36.1" y="2.1" width="2.2" height="2.2" fill="#bde9f0" opacity="0.75"/><rect x="2.7" y="29.7" width="2.2" height="2.2" fill="#bde9f0" opacity="0.75"/><rect x="8.3" y="29.7" width="2.2" height="2.2" fill="#bde9f0" opacity="0.75"/><rect x="13.8" y="29.7" width="2.2" height="2.2" fill="#bde9f0" opacity="0.75"/><rect x="19.4" y="29.7" width="2.2" height="2.2" fill="#bde9f0" opacity="0.75"/><rect x="25.0" y="29.7" width="2.2" height="2.2" fill="#bde9f0" opacity="0.75"/><rect x="30.5" y="29.7" width="2.2" height="2.2" fill="#bde9f0" opacity="0.75"/><rect x="36.1" y="29.7" width="2.2" height="2.2" fill="#bde9f0" opacity="0.75"/><path d="M17.5 12.5 L25.5 17.5 L17.5 22.5 Z" fill="#987167"/></svg>
<div class="t" style="left:947.5px;top:1794.3px;width:111.5px;overflow:hidden;font-size:28px;line-height:28px;color:#474747;">21</div>
<div class="t" style="left:1066.5px;top:1794.3px;width:390.5px;overflow:hidden;font-size:28px;line-height:28px;color:#474747;letter-spacing:-0.1px;">Surf Namibia.MOV</div>
<div class="t" style="left:1467.4px;top:1794.3px;width:150.6px;overflow:hidden;font-size:28px;line-height:28px;color:#474747;letter-spacing:-0.37px;">00:00:06....</div>
<div class="t" style="left:1627.6px;top:1794.3px;width:130.4px;overflow:hidden;font-size:28px;line-height:28px;color:#474747;">4.87 MB</div>
<div class="t" style="left:1767.3px;top:1794.3px;width:210.7px;overflow:hidden;font-size:28px;line-height:28px;color:#474747;"><span style="letter-spacing:0.9px">09/12/2017</span><span style="letter-spacing:-1px"> 1</span><span style="letter-spacing:-0.9px">...</span></div>
<div class="t" style="left:1987.6px;top:1794.3px;width:148.4px;overflow:hidden;font-size:28px;line-height:28px;color:#474747;"><span style="letter-spacing:0.9px">09/12/2017</span><span style="letter-spacing:-1px"> 1</span><span style="letter-spacing:-0.9px">...</span></div>
<div class="r" style="left:510px;top:1848px;width:10px;height:48px;background:#8ce88c;"></div>
<svg class="r" style="left:460px;top:1858px;" width="30" height="30" viewBox="0 0 30 30"><rect x="1" y="1" width="28" height="28" fill="#fff" stroke="#acacac" stroke-width="2"/><path d="M7.4 15 L12.5 20 L23 9.6" fill="none" stroke="#444" stroke-width="5.2" stroke-linecap="round" stroke-linejoin="round"/></svg>
<svg class="r" style="left:764px;top:1855px;" width="41" height="35" viewBox="0 0 41 35"><g fill="#987167" opacity="0.9"><rect x="0" y="0" width="41" height="34.5" rx="1"/></g><rect x="3.2" y="6.5" width="34.6" height="20.5" fill="#bde9f0"/><rect x="2.7" y="2.1" width="2.2" height="2.2" fill="#bde9f0" opacity="0.75"/><rect x="8.3" y="2.1" width="2.2" height="2.2" fill="#bde9f0" opacity="0.75"/><rect x="13.8" y="2.1" width="2.2" height="2.2" fill="#bde9f0" opacity="0.75"/><rect x="19.4" y="2.1" width="2.2" height="2.2" fill="#bde9f0" opacity="0.75"/><rect x="25.0" y="2.1" width="2.2" height="2.2" fill="#bde9f0" opacity="0.75"/><rect x="30.5" y="2.1" width="2.2" height="2.2" fill="#bde9f0" opacity="0.75"/><rect x="36.1" y="2.1" width="2.2" height="2.2" fill="#bde9f0" opacity="0.75"/><rect x="2.7" y="29.7" width="2.2" height="2.2" fill="#bde9f0" opacity="0.75"/><rect x="8.3" y="29.7" width="2.2" height="2.2" fill="#bde9f0" opacity="0.75"/><rect x="13.8" y="29.7" width="2.2" height="2.2" fill="#bde9f0" opacity="0.75"/><rect x="19.4" y="29.7" width="2.2" height="2.2" fill="#bde9f0" opacity="0.75"/><rect x="25.0" y="29.7" width="2.2" height="2.2" fill="#bde9f0" opacity="0.75"/><rect x="30.5" y="29.7" width="2.2" height="2.2" fill="#bde9f0" opacity="0.75"/><rect x="36.1" y="29.7" width="2.2" height="2.2" fill="#bde9f0" opacity="0.75"/><path d="M17.5 12.5 L25.5 17.5 L17.5 22.5 Z" fill="#987167"/></svg>
<svg class="r" style="left:621px;top:1863px;" width="26" height="26" viewBox="0 0 26 26"><circle cx="13" cy="13" r="12.4" fill="#f00"/><rect x="11" y="5.3" width="4" height="10" fill="#fff"/><rect x="11" y="17.3" width="4" height="3.8" fill="#fff"/></svg>
<div class="t" style="left:947.5px;top:1858.3px;width:111.5px;overflow:hidden;font-size:28px;line-height:28px;color:#474747;">22</div>
<div class="t" style="left:1066.5px;top:1858.3px;width:390.5px;overflow:hidden;font-size:28px;line-height:28px;color:#474747;letter-spacing:-0.33px;">Starfish Dace.MOV</div>
<div class="t" style="left:1467.4px;top:1858.3px;width:150.6px;overflow:hidden;font-size:28px;line-height:28px;color:#474747;letter-spacing:-0.37px;">00:00:06....</div>
<div class="t" style="left:1627.6px;top:1858.3px;width:130.4px;overflow:hidden;font-size:28px;line-height:28px;color:#474747;">3.66 MB</div>
<div class="t" style="left:1767.3px;top:1858.3px;width:210.7px;overflow:hidden;font-size:28px;line-height:28px;color:#474747;"><span style="letter-spacing:0.9px">09/12/2017</span><span style="letter-spacing:-1px"> 1</span><span style="letter-spacing:-0.9px">...</span></div>
<div class="t" style="left:1987.6px;top:1858.3px;width:148.4px;overflow:hidden;font-size:28px;line-height:28px;color:#474747;"><span style="letter-spacing:0.9px">05/16/2018</span><span style="letter-spacing:-1px"> 1</span><span style="letter-spacing:-0.9px">...</span></div>
<div class="r" style="left:440px;top:1456px;width:1710px;height:56px;border:4px solid #33afd9;"></div>
<div class="r" style="left:440px;top:1916px;width:1696px;height:2px;background:#dedede;"></div>
<div class="r" style="left:440px;top:1918px;width:1696px;height:72px;background:#f7f7f7;"></div>
<div class="r" style="left:440px;top:1918px;width:2px;height:72px;background:#e4e4e4;"></div>
<div class="r" style="left:440px;top:1990px;width:1696px;height:2px;background:#e2e2e2;"></div>
<div class="r" style="left:846px;top:1926px;width:2px;height:55px;background:#dcdcdc;"></div>
<div class="t" style="left:521.5px;top:1939.8px;font-size:28px;line-height:28px;color:#4a4a4a;">1 - 7 of 7 (7 selected)</div>
<div class="r" style="left:0px;top:1996px;width:2136px;height:2px;background:#282a36;"></div>
<div class="r" style="left:0px;top:1998px;width:2136px;height:4px;background:#fff;"></div>
<svg class="r" style="left:1300px;top:0px;" width="80" height="142" viewBox="0 0 80 142"><path d="M31 -5 V99.6 H9.6 L40.8 137.8 L72 99.6 H51 V-5 Z" fill="#dae8fc" stroke="#6c8ebf" stroke-width="2"/></svg>
<svg class="r" style="left:340px;top:1750px;" width="130" height="130" viewBox="0 0 130 130"><path d="M121 11 L115.5 60 L100.8 45.5 L28.7 117.7 L14.6 102.5 L86.8 32 L71 15.6 Z" fill="#dae8fc" stroke="#6c8ebf" stroke-width="2"/></svg>
<div class="r" style="left:1336px;top:198px;width:202px;height:40px;border:2px solid #8a8a8a;background:#fff;"></div>
<div class="t" style="left:1350.0px;top:209.1px;font-size:24px;line-height:24px;color:#1a1a1a;-webkit-text-stroke:0.15px #1a1a1a;">MultiTrack Editor</div>
<svg class="r" style="left:1318px;top:150px;" width="46" height="58" viewBox="0 0 46 58"><path d="M17.2 7.0 Q19.9 2.5 22.7 7.0 L22.7 19.5 L37.5 21.5 Q41.0 22.5 41.0 26.5 L41.0 45.0 Q40.0 51.5 33.5 53.0 L24.5 53.0 Q20.5 52.5 16.5 47.5 L7.0 36.5 Q5.0 33.5 7.8 31.5 Q11.0 29.5 14.0 32.5 L17.2 35.5 Z" fill="#fff" stroke="#1e1e28" stroke-width="1.9" stroke-linejoin="round"/><path d="M22.7 20.0 V28 M28.6 21.0 V28 M34.9 21.5 V28" stroke="#1e1e28" stroke-width="1.7"/></svg>
</body></html>
